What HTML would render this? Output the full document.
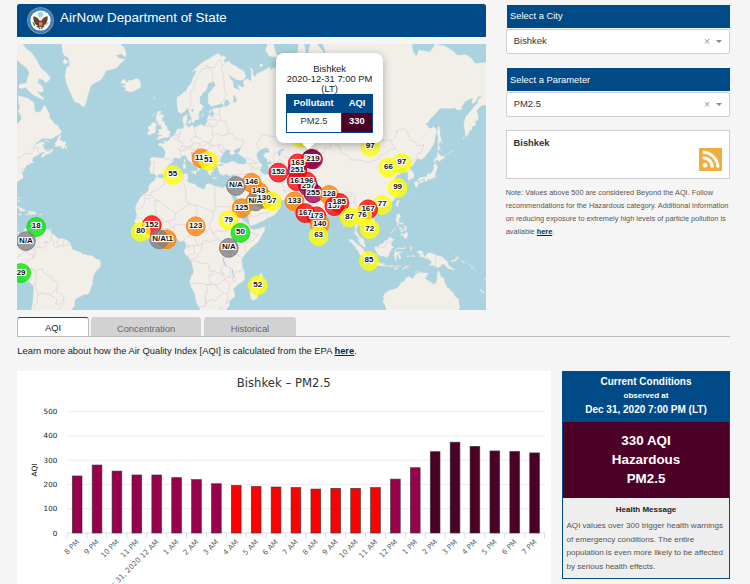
<!DOCTYPE html>
<html lang="en"><head><meta charset="utf-8"><title>AirNow Department of State</title>
<style>
*{box-sizing:border-box;margin:0;padding:0}
html,body{width:750px;height:584px;overflow:hidden;background:#f5f5f5}
body{font-family:"Liberation Sans",Arial,sans-serif;color:#222;position:relative}
.abs{position:absolute}
#hdr{left:17px;top:3.8px;width:469px;height:33px;background:#004a87;border-radius:2.5px 2.5px 0 0;box-shadow:0 1px 0 #fff}
#hdr .t{position:absolute;left:43.1px;top:4.5px;font-size:13.4px;color:#fff;line-height:20px;white-space:nowrap}
#map{left:17px;top:44px;width:469px;height:265.5px;background:#aad3df;overflow:hidden}
.sh{left:506.5px;width:223px;height:23.4px;background:#004a87;color:#fff;font-size:9.4px;line-height:22.6px;padding-left:3.5px}
.sel{left:506.3px;width:223.5px;height:24.4px;background:#fff;border:1px solid #ccc;border-radius:2.5px;font-size:9.4px;line-height:22px;padding-left:6.5px;color:#333}
.sel .x{position:absolute;right:18.6px;top:-.5px;color:#999;font-size:10.5px}
.sel .a{position:absolute;right:7px;top:10px;width:0;height:0;border-left:3px solid transparent;border-right:3px solid transparent;border-top:3.200px solid #888}
#rss{left:506px;top:130px;width:224px;height:48.7px;background:#fff;border:1px solid #ccc}
#rss b{position:absolute;left:6.5px;top:6px;font-size:9.4px;color:#333;line-height:11px}
#note{left:505.7px;top:185.5px;width:232px;font-size:7.35px;line-height:13px;color:#555}
#note a{color:#0a2a4a;font-weight:bold;text-decoration:underline}
.tab{top:317.3px;height:19.6px;font-size:9.4px;text-align:center;line-height:19.5px;border-radius:3px 3px 0 0}
#tabline{left:17px;top:336.4px;width:713px;height:1px;background:#bbb}
#learn{left:17.3px;top:344.5px;font-size:9.35px;line-height:12px;color:#222;white-space:nowrap}
#learn a{color:#0a2a4a;font-weight:bold;text-decoration:underline}
#chart{left:17.3px;top:371px;width:533.7px;height:213px;background:#fff}
#cc{left:562px;top:370.7px;width:168px;height:208.8px;border:1px solid #004a87;background:#eee}
#cc .n{position:absolute;left:0;top:0;width:100%;height:50.3px;background:#004a87;color:#fff;text-align:center;font-weight:bold}
#cc .m{position:absolute;left:0;top:50.3px;width:100%;height:76.2px;background:#4c0026;color:#fff;text-align:center;font-weight:bold;font-size:13.4px;line-height:19px;padding-top:9.5px}
#cc .h{position:absolute;left:0;top:132.3px;width:100%;text-align:center;font-weight:bold;font-size:8px;color:#222;line-height:12px}
#cc .p{position:absolute;left:3.5px;top:147.1px;width:164px;font-size:8.05px;line-height:13.85px;color:#555}

.ml{position:absolute;width:30px;text-align:center;font-weight:bold;font-size:8px;line-height:9px;color:#111;text-shadow:-1px -1px 0 #fff,1px -1px 0 #fff,-1px 1px 0 #fff,1px 1px 0 #fff,0 -1px 0 #fff,0 1px 0 #fff,-1px 0 0 #fff,1px 0 0 #fff,0 0 2px #fff,0 0 2px #fff}
.pop{position:absolute;width:107.6px;height:89.8px;background:#fff;border-radius:8px;box-shadow:0 2px 8px rgba(0,0,0,.3)}
.pop .pt{position:absolute;left:0;top:10.6px;width:100%;text-align:center;font-size:9.4px;line-height:10.05px;color:#1a1a1a}
.tb{position:absolute;left:10.1px;top:40.7px;width:87px;height:38.9px;background:#004a87;font-size:9.4px}
.tb .c{position:absolute;text-align:center;line-height:11px;white-space:nowrap}
.tb .h1{left:0;top:3.2px;width:55.4px;color:#fff;font-weight:bold}
.tb .h2{left:55.4px;top:3.2px;width:31.600px;color:#fff;font-weight:bold}
.tb .d1{left:.9px;top:19.3px;width:54.5px;height:18.7px;background:#fff;color:#333;padding-top:2.1px}
.tb .d2{left:55.8px;top:19.3px;width:30.3px;height:18.7px;background:#4c0026;color:#fff;font-weight:bold;padding-top:2.1px}
.tip{position:absolute;left:286.3px;top:90.6px;width:10px;height:10px;transform:rotate(45deg);box-shadow:0 2px 8px rgba(0,0,0,.3)}
</style></head><body>
<div id="hdr" class="abs">
<svg class="abs" style="left:9.8px;top:2.8px" width="27" height="27" viewBox="0 0 27 27">
<circle cx="13.5" cy="13.5" r="13.3" fill="#b5b06a"/><circle cx="13.5" cy="13.5" r="12.75" fill="#3d7fc4"/><circle cx="13.5" cy="13.5" r="10.1" fill="#fdfdfb"/>
<circle cx="13.5" cy="7.500" r="2.700" fill="#a5cfe9"/>
<path d="M6.400 9.200c1.700.3 3.300 1 4.600 2.200l1.400 2h2.200l1.400-2c1.300-1.200 2.900-1.900 4.600-2.200.3 2.900-.3 5.600-2 8l-2.300 1.600 1.600 1.300-2.200.3-1 2-1.200-1.500-1.200 1.500-1-2-2.200-.3 1.600-1.300-2.300-1.600c-1.700-2.400-2.300-5.100-2-8z" fill="#6b4320"/>
<path d="M12.300 10.800c.3-.9.800-1.300 1.300-1.300s1 .4 1.200 1.300l-.4 1.700h-1.700z" fill="#efe9d8"/>
<rect x="12" y="14.200" width="3.300" height="4.400" rx=".9" fill="#ee7a86"/><path d="M12 14.200h3.300v1.400h-3.300z" fill="#2b5fb5"/>
<path d="M5.600 14.400c1.200.8 2.200 2.100 2.800 3.800l-.9 1.100c-1.100-1.300-1.800-2.900-1.900-4.900z" fill="#4e8b43"/>
<path d="M21.200 14.600l-2.700 3.600.7.900 2.600-3.700z" fill="#b9b9b9"/>
<path d="M11.700 19.800l1.800 2.200 1.800-2.200z" fill="#c9c4b8"/>
</svg>
<div class="t">AirNow Department of State</div></div>
<div id="map" class="abs">
<svg width="469" height="265.5" viewBox="0 0 469 265.5" style="position:absolute;left:0;top:0">
<path fill="#f2efe9" stroke="#e3dcd2" stroke-width="0.3" d="M203.0,10.1 199.4,9.8 195.4,12.4 191.2,15.3 186.4,17.5 183.6,19.7 180.7,22.4 177.9,24.5 175.0,27.6 177.9,26.8 179.8,27.0 177.7,30.6 175.0,35.9 173.7,40.0 171.6,41.8 168.9,47.1 166.4,48.4 164.9,49.7 161.9,52.2 160.0,53.4 159.8,58.2 160.2,60.5 160.0,62.5 160.9,66.0 161.1,67.7 163.7,69.5 165.5,69.1 167.0,67.8 169.3,65.8 170.2,63.6 171.0,65.1 171.5,66.2 172.9,70.6 174.1,73.4 174.7,74.2 174.1,75.4 174.4,76.3 175.0,77.8 174.7,78.5 176.5,78.5 177.6,78.0 177.5,76.8 178.5,76.0 180.0,76.0 180.8,75.6 181.4,74.2 181.6,72.1 182.0,70.4 182.4,67.3 184.2,66.8 185.1,65.1 186.4,63.0 186.1,61.7 183.0,59.4 182.8,57.0 182.9,55.4 183.3,52.6 184.4,51.6 186.0,48.8 188.9,46.9 190.6,42.7 191.2,40.0 192.5,38.9 196.2,37.7 197.0,38.0 198.6,41.4 196.8,42.7 194.2,46.5 191.2,49.7 190.9,53.2 191.2,56.0 191.1,57.8 190.8,59.0 192.5,60.5 194.0,62.8 197.9,61.5 201.6,60.4 204.9,59.4 207.8,62.3 205.5,62.5 203.6,63.8 200.7,63.8 197.4,64.2 195.0,65.1 195.0,66.6 196.9,68.2 196.6,69.8 196.2,72.8 194.4,73.0 193.3,70.4 191.3,71.6 190.2,74.8 190.4,77.5 188.3,80.0 188.2,81.5 187.2,82.0 186.0,81.9 186.1,81.2 185.1,80.4 183.7,80.6 182.3,81.2 179.9,82.5 177.4,83.4 176.5,82.6 176.2,81.2 175.2,81.7 174.1,81.6 173.3,82.6 172.1,83.4 171.0,83.3 171.4,81.8 169.6,82.0 169.1,80.5 168.7,79.2 168.9,78.2 169.8,76.0 171.0,75.1 169.9,74.4 169.9,73.0 170.3,71.4 170.4,70.4 169.2,70.9 166.6,72.6 165.9,74.1 165.7,76.5 165.6,78.0 166.3,78.3 166.7,80.2 166.6,82.1 167.1,82.8 166.8,83.5 166.4,84.6 165.7,84.6 163.8,84.1 163.7,85.2 163.4,84.9 160.7,85.0 159.3,86.5 158.9,88.0 158.1,89.5 157.0,91.1 155.8,91.8 154.7,92.4 153.8,92.7 153.3,92.9 153.3,93.4 153.3,94.9 152.3,95.7 150.4,97.0 149.9,97.6 148.2,97.4 147.8,96.4 147.2,96.5 146.5,96.3 147.2,97.9 147.2,98.9 147.4,99.5 146.4,99.4 145.1,99.8 144.3,98.9 142.6,99.2 141.2,100.2 141.9,100.5 141.2,101.2 141.9,101.9 143.8,102.1 144.3,102.8 145.5,103.3 146.1,103.4 146.4,104.7 146.8,105.5 148.1,106.5 148.2,108.1 147.9,110.6 147.4,113.6 146.4,114.1 144.5,114.0 143.0,113.7 139.5,113.5 136.9,113.5 135.6,112.8 134.3,113.9 132.6,115.2 133.6,117.0 133.8,119.7 133.4,122.0 132.3,124.2 132.2,125.5 132.9,125.7 132.7,126.5 133.4,127.6 133.1,129.8 135.2,129.8 137.0,129.4 138.3,131.0 139.6,132.2 140.1,131.9 141.9,130.6 143.6,130.6 145.6,130.3 146.1,130.5 148.9,128.3 149.3,126.6 150.7,125.7 149.6,123.9 150.2,122.6 151.9,120.7 152.6,119.8 154.4,119.1 156.6,116.7 156.1,115.7 156.2,114.7 157.3,113.9 159.0,113.9 160.4,114.1 161.5,114.7 162.9,114.2 164.1,113.1 167.3,111.2 169.0,112.0 169.9,113.5 170.2,115.1 171.4,116.5 172.7,117.2 173.6,118.1 174.2,118.9 176.1,119.5 177.4,120.5 177.5,121.0 178.3,120.9 178.8,122.0 179.4,122.5 180.3,123.8 180.9,125.0 180.4,125.9 180.1,127.2 180.8,127.6 181.9,126.6 182.9,124.8 181.7,123.2 183.1,121.4 184.5,122.4 185.2,123.0 185.5,122.2 184.4,121.0 182.4,119.7 181.1,117.8 178.8,117.5 177.3,116.3 176.0,113.3 174.2,112.1 174.1,109.7 173.8,108.5 176.5,107.9 176.0,108.3 176.6,110.0 177.8,108.7 179.3,112.0 181.6,113.6 184.7,115.8 186.6,117.2 187.3,119.2 187.4,121.4 188.3,123.3 188.9,123.8 189.8,125.1 190.4,126.6 191.6,126.8 190.5,127.6 191.4,129.1 191.6,130.3 193.1,131.3 193.7,130.3 194.4,131.2 194.1,129.1 193.7,128.5 195.0,128.8 194.1,127.7 195.3,127.6 196.0,128.3 196.1,127.0 194.1,125.4 193.3,125.3 194.0,124.2 194.6,124.3 193.9,122.8 193.3,122.3 193.9,121.0 194.7,121.9 195.4,122.7 196.0,122.7 196.7,122.2 195.8,120.8 196.7,120.2 199.5,120.4 199.9,121.0 200.2,122.4 200.1,122.7 199.9,123.8 201.1,124.3 201.5,126.4 200.3,126.7 202.2,127.8 202.5,129.8 204.1,130.2 203.6,130.8 205.7,130.7 206.7,131.7 208.7,130.1 211.2,130.9 212.8,132.1 214.9,131.5 216.2,130.3 217.6,130.9 219.1,130.8 218.7,132.0 218.4,133.3 218.6,134.8 218.5,135.8 217.9,137.1 217.3,138.5 216.9,139.6 216.5,141.2 215.9,142.5 214.6,143.4 211.8,143.0 212.2,146.0 213.3,147.9 214.2,149.7 215.5,150.8 216.0,149.1 216.8,146.9 216.5,148.3 216.2,150.2 218.2,151.6 219.7,154.0 222.7,158.5 224.5,161.2 224.8,163.9 226.9,166.6 228.5,168.7 231.3,173.1 232.0,177.3 232.6,180.2 233.0,181.5 236.0,181.2 238.8,180.0 243.8,177.8 247.4,176.5 249.7,174.5 253.3,172.9 255.6,171.9 257.6,171.1 258.8,169.1 260.3,168.9 260.2,167.6 261.3,166.1 262.2,165.5 264.2,161.7 263.6,161.6 261.9,159.5 258.3,157.9 257.6,156.3 257.7,153.7 256.8,154.9 255.6,156.0 253.8,157.7 250.7,158.5 248.5,158.1 248.5,156.6 248.4,156.0 248.3,155.2 247.8,154.2 247.0,155.8 246.9,157.1 245.9,155.2 245.7,153.5 244.8,152.4 242.6,149.3 241.7,147.3 241.3,147.1 242.1,146.1 242.7,146.0 243.4,145.2 245.8,145.7 247.1,148.1 248.2,150.4 249.4,150.6 254.8,153.3 257.4,152.0 258.6,152.4 259.0,153.6 260.3,155.2 265.7,156.0 267.6,156.2 269.0,156.3 271.1,156.0 273.4,156.2 276.9,155.8 277.8,157.0 278.8,158.9 280.2,159.3 280.9,160.4 282.3,161.1 284.2,160.9 283.6,161.8 281.8,161.9 281.6,162.4 282.8,163.6 284.3,165.1 285.5,165.5 287.6,164.5 287.7,163.3 288.3,162.2 288.8,164.7 289.0,166.1 289.0,169.0 289.9,173.0 290.8,176.0 291.4,177.3 292.8,181.1 294.6,184.2 295.5,186.8 296.8,189.6 298.0,190.4 299.1,189.0 301.3,188.0 302.3,186.1 302.3,182.9 303.2,180.7 302.9,178.0 303.2,175.9 304.8,174.6 306.9,173.0 308.9,171.5 312.0,168.4 313.7,167.3 315.3,166.4 316.0,164.5 316.9,163.6 318.1,163.5 319.8,163.3 322.2,163.1 323.2,161.8 325.1,162.2 325.4,164.0 326.1,165.2 327.2,166.6 328.4,168.1 329.9,170.0 330.2,172.3 329.7,174.9 331.2,175.4 333.6,173.8 334.8,172.3 336.1,174.0 336.5,176.4 337.1,178.8 338.1,181.9 338.0,186.7 337.5,189.7 337.5,190.8 338.6,190.4 339.8,191.7 340.8,193.3 341.3,195.5 341.9,197.7 343.3,200.1 345.0,201.6 347.4,203.3 348.3,203.3 348.8,203.0 348.1,201.2 347.1,198.6 347.2,197.0 346.7,195.6 345.0,194.0 344.1,193.5 343.1,192.7 341.9,192.0 340.9,189.6 340.5,188.2 339.5,188.3 339.2,185.7 340.3,183.2 340.7,181.7 340.8,180.6 341.8,179.8 342.4,181.0 342.4,181.5 343.2,181.4 344.7,182.0 346.2,183.5 346.6,184.3 347.4,185.4 348.7,185.6 349.3,185.9 350.4,186.7 349.9,188.2 349.8,189.4 350.8,188.9 351.7,188.1 353.5,186.7 354.2,186.0 356.1,184.9 357.9,183.6 358.2,183.0 358.2,182.3 358.7,181.0 358.3,179.3 357.7,176.5 356.4,174.8 355.4,173.8 353.3,172.0 351.7,169.4 352.0,167.4 353.3,166.4 353.7,165.3 354.2,165.0 356.0,163.9 358.1,163.9 359.2,164.0 359.6,166.3 360.3,166.3 360.7,165.5 360.5,164.5 361.7,164.0 363.5,163.4 365.5,162.8 366.5,162.5 366.6,161.3 367.8,162.2 368.9,161.4 370.0,161.2 372.5,160.0 373.7,159.2 375.2,157.7 376.3,156.8 377.1,156.0 378.1,154.5 378.8,152.8 380.4,150.4 381.9,148.9 382.5,147.6 382.4,146.1 380.5,145.1 382.4,144.0 382.4,142.1 381.5,140.4 380.5,139.2 379.8,137.3 377.5,135.1 378.0,133.6 379.5,132.1 380.7,130.8 383.7,130.1 384.0,128.9 382.8,128.6 381.5,128.5 380.2,127.9 378.6,128.9 376.8,129.1 377.5,128.0 375.0,127.0 374.5,126.0 374.5,125.0 376.8,124.6 378.1,122.7 380.6,120.8 381.1,120.3 383.0,120.9 381.9,123.0 381.3,124.3 381.9,125.3 383.2,124.3 384.9,123.3 387.1,122.8 387.8,123.5 388.9,123.7 388.7,125.7 387.8,127.2 389.1,128.2 391.4,128.8 391.2,130.1 390.5,130.3 391.3,132.3 390.8,135.0 391.2,136.2 393.6,135.3 396.1,134.3 396.7,133.4 397.0,132.1 396.8,129.8 395.9,128.0 395.2,127.0 393.0,124.6 393.5,123.0 394.4,122.5 396.3,120.9 397.5,118.1 398.6,116.9 399.2,116.7 399.5,115.9 401.5,114.7 403.4,115.4 405.1,115.2 407.9,113.0 410.4,109.5 413.7,105.4 416.0,101.3 417.5,98.5 418.4,91.1 419.8,88.8 419.2,86.3 419.6,85.4 417.5,83.4 416.5,82.5 414.1,84.4 411.6,83.8 410.8,81.2 408.0,80.8 411.2,78.2 413.4,74.9 417.9,70.2 423.0,64.5 428.0,64.3 433.1,64.7 437.5,63.8 440.7,66.2 445.5,65.1 444.5,63.6 448.3,57.4 453.1,55.0 456.0,54.6 454.6,57.8 455.6,59.8 458.8,57.4 461.3,52.6 464.5,52.2 461.3,55.8 460.3,59.4 458.4,61.3 454.9,65.5 451.6,69.5 448.7,72.7 447.2,77.8 446.8,82.1 447.8,87.0 448.7,92.9 451.8,89.4 452.3,86.3 455.0,86.0 455.0,83.1 459.0,80.7 458.4,78.2 459.8,75.8 461.4,76.5 461.1,70.6 459.8,67.7 460.8,64.9 463.6,62.5 466.4,60.9 474.6,62.5 479.8,56.2 489.3,52.2 493.1,41.4 493.1,21.9 483.6,17.5 474.0,16.4 468.3,18.6 457.9,19.2 455.0,14.7 449.3,10.7 440.7,11.3 436.0,7.1 428.3,2.2 418.8,-0.3 418.2,-1.0 416.0,3.5 413.1,7.7 408.3,7.1 401.7,5.9 399.8,11.9 397.9,10.7 396.0,6.5 395.0,2.2 396.9,-1.0 392.1,-5.6 386.4,-6.3 384.5,-1.6 377.9,-2.3 367.4,-6.3 359.8,-8.3 354.1,-2.9 352.1,-10.4 350.2,-31.2 340.7,-27.1 321.7,-20.0 316.0,-16.2 314.1,-8.3 315.0,-4.9 304.0,-4.9 307.4,4.7 308.3,10.7 305.5,6.5 301.7,2.2 298.8,-1.0 293.1,-0.3 291.2,8.9 291.8,16.4 290.8,21.9 291.8,25.5 289.3,29.6 287.4,33.0 285.5,34.4 286.4,30.6 287.8,24.5 288.7,19.2 288.5,13.6 288.9,7.7 287.4,0.9 283.6,-3.6 281.3,0.9 280.7,7.7 277.5,11.9 278.2,17.5 277.5,21.9 278.8,25.0 276.0,22.9 273.1,20.2 266.4,17.0 265.1,18.6 264.5,24.0 260.7,22.4 256.9,24.0 255.0,25.0 253.7,26.0 253.1,22.4 249.3,25.0 245.5,27.0 242.6,28.6 239.8,29.1 238.8,32.5 236.0,31.0 236.0,25.5 232.7,23.7 234.4,27.6 234.1,34.0 234.1,37.3 231.2,34.9 227.4,35.4 226.1,38.7 227.0,42.7 225.9,43.2 222.6,41.8 220.3,40.7 221.7,44.1 222.6,46.3 216.7,43.6 216.5,41.4 216.0,37.3 213.1,34.0 212.0,31.3 215.6,33.5 218.8,35.6 223.6,36.6 226.4,35.4 228.7,33.0 228.9,31.5 226.1,26.3 222.6,25.0 218.8,21.9 214.1,20.0 212.2,17.0 209.3,18.1 207.4,17.8 206.4,15.9 209.5,14.4 207.4,12.4 205.7,11.5 204.3,13.0ZM139.2,132.7 140.2,132.5 141.9,134.2 142.8,134.0 144.6,133.9 146.1,134.3 149.0,132.9 150.4,132.3 152.7,131.0 156.1,130.4 157.7,130.0 159.9,130.4 161.2,130.3 163.4,130.1 165.0,130.1 166.9,130.0 169.0,129.1 169.9,130.2 171.3,129.7 170.4,131.3 170.5,132.6 171.3,133.4 170.8,135.2 169.5,137.1 171.2,137.4 171.4,138.0 172.2,138.8 175.4,139.4 179.0,140.6 179.6,142.3 181.9,143.2 184.5,144.5 185.6,144.8 186.8,145.3 188.4,144.1 188.4,141.2 190.1,139.8 192.4,139.4 193.4,139.7 194.3,140.5 195.9,141.2 198.1,141.9 198.2,142.4 199.6,142.3 202.2,142.9 204.5,143.5 205.4,144.0 207.2,143.2 208.2,142.6 209.5,142.3 210.9,142.5 211.8,143.0 212.2,146.0 211.9,146.7 212.4,147.8 213.3,149.5 214.7,151.8 214.9,152.9 215.5,154.3 216.7,156.4 217.8,158.8 218.4,158.9 220.1,162.4 221.1,165.1 221.1,167.7 221.4,168.7 223.0,170.5 223.8,170.9 224.5,173.9 225.4,175.7 226.4,176.9 228.2,177.5 229.7,179.0 231.7,180.8 232.4,181.9 232.7,182.8 231.3,183.7 232.4,183.6 233.1,184.0 236.0,185.8 238.8,185.2 242.1,184.4 243.9,184.2 246.9,182.8 247.9,183.1 247.7,185.5 247.2,187.6 245.2,190.6 244.2,192.6 242.7,195.6 240.7,198.2 236.6,201.9 235.5,202.5 234.1,203.7 231.3,206.5 229.5,208.9 228.2,210.1 226.7,211.9 225.8,213.5 224.7,215.5 224.2,217.2 224.3,218.1 225.1,218.8 225.4,220.1 225.5,222.9 225.9,224.9 226.8,225.5 227.4,226.4 227.4,230.7 227.8,233.8 227.8,234.8 226.2,237.1 222.9,239.2 220.7,240.7 219.4,242.4 216.7,244.3 216.4,245.7 216.9,246.7 217.5,248.8 217.9,252.6 217.7,253.1 214.4,255.3 212.3,257.1 213.0,257.8 212.9,258.9 212.1,262.3 211.4,263.1 209.4,265.5 208.2,267.4 203.4,272.4 199.0,274.7 188.3,276.7 185.4,274.5 184.3,272.4 185.1,270.4 183.1,266.5 182.4,264.1 181.6,262.8 179.1,258.5 178.6,255.0 177.9,250.7 176.8,248.3 175.5,245.3 174.4,243.4 172.6,239.2 172.8,236.3 173.4,235.1 174.1,232.5 175.8,230.0 176.6,227.3 176.4,226.4 175.4,222.7 175.2,220.8 174.8,219.6 173.8,217.5 173.5,216.4 172.8,215.0 170.5,212.3 168.5,210.4 168.0,209.4 166.8,207.0 168.2,205.0 168.5,203.9 168.9,202.2 169.1,200.2 168.4,198.4 167.8,198.2 166.8,197.1 166.1,197.0 163.9,197.4 162.2,197.6 160.4,195.6 159.6,194.2 156.7,193.5 154.9,193.7 152.6,194.1 152.2,194.5 149.9,195.2 147.9,196.1 146.3,196.7 144.3,196.1 142.6,195.8 138.7,196.4 137.6,196.7 135.5,197.5 133.1,196.3 131.1,194.6 129.7,193.8 128.6,192.9 126.4,191.5 125.0,189.6 124.2,187.6 122.4,185.4 121.5,184.5 120.5,183.1 119.0,182.4 118.3,182.0 118.6,179.9 118.3,179.3 117.9,178.0 116.9,177.4 117.7,176.9 118.8,174.9 119.8,170.7 119.4,168.9 118.8,168.2 119.2,166.3 117.8,165.3 118.0,164.2 119.9,159.3 121.7,156.6 122.6,154.2 124.7,152.1 125.6,150.4 128.7,149.1 130.9,147.2 131.9,144.9 131.4,144.5 131.6,142.5 132.6,140.7 134.1,138.6 135.7,137.8 137.2,136.8 138.5,134.1 139.0,132.7ZM244.1,228.7 244.7,230.4 245.5,231.5 245.8,233.3 246.0,234.5 246.4,236.6 245.0,235.6 245.0,237.0 245.2,238.3 244.3,241.0 243.5,243.3 243.2,244.5 242.3,247.2 241.7,249.1 241.4,250.5 240.9,251.6 240.3,253.5 239.8,255.1 236.2,256.3 234.2,255.0 233.5,253.7 233.4,251.6 232.6,249.2 232.9,248.3 233.9,246.5 234.6,245.3 235.0,244.1 234.1,240.8 234.2,239.1 234.9,237.0 236.5,236.8 238.5,236.1 239.8,235.5 241.2,234.0 241.5,232.7 242.2,231.8 243.1,230.6 243.1,229.6ZM303.1,187.0 302.4,187.2 302.4,188.6 302.2,190.5 302.3,192.6 303.0,194.3 303.8,194.5 304.8,194.1 305.9,193.4 306.1,192.7 305.9,191.1 305.0,189.4 304.2,188.1ZM103.6,39.1 104.9,36.3 107.4,34.7 109.5,38.7 111.6,36.3 115.4,36.1 119.4,34.4 122.4,35.4 124.3,40.9 122.6,44.1 121.3,44.7 117.9,46.7 114.1,48.3 111.6,47.8 109.9,46.5 107.0,46.7 108.3,45.2 108.3,43.6 104.5,42.1 108.3,41.4 107.6,39.6ZM139.4,95.4 143.4,94.9 145.6,94.0 147.8,93.7 150.7,93.3 152.2,92.8 152.9,92.1 153.0,91.3 151.6,91.0 152.5,90.1 153.6,87.9 152.7,86.5 151.0,86.5 150.6,86.6 150.9,85.7 150.4,84.4 150.1,82.8 149.1,81.5 148.0,81.0 147.6,79.8 147.2,77.8 146.4,77.2 145.5,76.5 144.2,76.5 145.3,75.4 144.9,74.9 146.3,73.0 146.8,71.3 146.4,70.6 144.0,70.6 142.3,71.3 143.0,70.0 144.3,67.8 144.5,67.1 143.8,67.1 140.7,67.3 140.2,69.5 139.2,70.9 139.4,73.0 138.4,74.1 139.6,75.4 139.2,78.8 140.7,77.5 140.9,76.8 141.4,78.3 140.5,80.3 141.0,81.0 143.4,80.2 143.4,81.5 144.2,82.8 144.7,82.8 144.4,83.9 144.5,85.0 143.8,85.2 141.5,85.4 141.2,87.0 142.4,87.6 142.4,88.2 141.3,89.1 140.2,89.8 140.5,90.5 142.1,90.7 142.7,90.7 144.2,91.1 145.1,90.7 144.5,91.9 142.3,91.9 141.7,92.5 140.6,94.3ZM138.2,88.9 138.8,86.5 138.6,85.2 138.4,83.1 139.9,81.8 139.4,80.8 138.5,79.1 136.2,78.6 134.4,79.3 133.7,80.8 134.4,81.5 133.9,82.1 131.2,82.3 131.0,83.3 130.8,85.0 133.1,85.7 132.3,86.5 131.4,87.7 130.3,89.1 130.8,90.1 131.6,91.1 134.1,90.7 134.6,90.1 137.1,89.1ZM173.9,127.9 175.7,127.0 180.1,126.8 179.0,129.1 179.1,130.7 177.5,129.8 176.0,129.1 174.3,128.5ZM165.9,120.2 167.8,119.4 168.9,121.3 168.5,124.6 167.4,125.0 166.2,125.0 166.2,121.8ZM166.6,116.5 168.2,114.9 168.4,117.2 167.9,119.0 167.0,118.5ZM195.0,133.4 196.3,133.2 199.2,133.7 200.3,134.1 200.0,134.6 197.3,134.7 195.1,134.0ZM211.8,134.4 213.1,133.7 216.1,133.0 214.8,134.3 215.1,134.6 213.1,135.6 212.0,135.1ZM154.7,123.5 156.2,122.7 156.8,123.3 156.1,124.3ZM194.1,125.1 194.8,125.0 197.1,127.2 196.3,127.4ZM11.2,-44.7 20.7,-23.1 30.3,-24.7 38.8,-19.2 41.7,-8.3 44.5,-0.3 45.5,7.7 47.4,11.9 51.2,13.6 52.7,20.8 49.5,23.4 48.0,32.5 49.5,39.6 51.8,45.0 54.4,50.9 55.6,54.2 58.3,58.2 62.6,59.4 64.7,62.1 66.6,62.8 68.2,61.7 69.1,58.2 70.3,54.2 71.2,50.1 73.1,44.5 74.1,41.4 77.9,38.7 81.7,37.3 85.5,34.0 89.3,26.5 95.0,25.5 99.8,24.0 103.6,19.2 108.0,15.6 102.6,14.2 98.8,11.3 104.5,10.1 108.3,13.6 109.3,9.5 107.4,3.5 103.6,0.9 108.3,-1.6 112.2,-8.3 114.1,-23.1 112.2,-49.6 93.1,-99.1 36.0,-84.5ZM45.7,18.6 47.4,14.7 51.2,17.5 48.9,20.2ZM-40.2,156.6 -4.6,156.6 -2.3,153.4 -3.3,149.1 -4.6,144.8 -4.0,141.9 -1.9,139.8 -0.2,138.0 1.9,137.1 4.3,135.3 6.4,134.0 5.7,130.8 5.5,129.8 4.7,129.1 4.9,127.4 4.5,124.5 5.3,126.2 5.7,128.6 6.3,127.7 7.2,126.2 6.6,124.3 7.6,125.1 9.1,123.0 9.3,121.4 9.5,121.0 13.1,120.0 14.1,119.0 15.6,118.8 16.9,118.3 16.9,117.4 15.8,117.6 15.2,116.5 15.8,115.8 15.8,114.7 16.5,113.2 18.8,112.3 20.3,111.5 22.6,110.2 22.4,109.3 24.5,108.9 26.8,107.7 27.6,108.7 24.9,110.7 24.3,112.8 25.3,113.7 27.8,111.5 29.2,110.7 34.1,108.8 33.3,107.9 36.0,107.2 35.2,104.3 33.3,106.3 32.3,107.3 30.3,107.4 28.3,106.6 26.8,104.1 26.6,101.9 24.5,101.3 27.8,100.2 28.0,98.9 25.5,97.7 22.6,98.4 19.8,99.9 17.5,101.6 16.0,103.6 14.6,104.5 16.5,102.4 17.5,100.9 19.6,98.4 22.1,97.3 23.8,94.9 28.3,94.6 32.5,94.9 36.0,94.6 38.1,92.5 41.5,91.1 44.2,89.1 44.0,86.3 41.9,84.1 41.1,81.5 38.3,80.2 36.9,79.2 35.4,76.5 32.7,73.7 32.5,69.5 30.3,65.8 27.8,60.9 25.5,64.0 24.5,66.6 20.2,68.8 17.7,66.2 17.5,62.1 16.9,58.2 13.5,56.2 11.2,54.2 6.4,53.0 1.9,51.8 1.3,52.6 1.7,59.0 3.0,63.2 0.7,66.9 3.6,71.3 4.5,74.8 1.7,78.8 -1.2,80.8 -1.2,91.0 -5.9,86.6 -6.5,79.5 -11.6,78.8 -17.4,74.8 -25.9,73.0 -29.7,66.6 -30.1,60.9 -26.9,55.0 -22.1,48.0 -17.4,45.0 -14.5,36.8 -11.6,35.4 -5.9,34.4 -5.0,24.5 -6.9,18.1 -11.6,17.5 -17.4,23.4 -22.1,20.2 -26.9,10.7 -32.6,7.7 -40.2,16.4ZM37.3,102.4 39.0,99.9 37.5,99.9 39.8,97.0 40.9,93.4 43.8,90.7 44.5,91.6 42.1,96.1 43.8,95.5 45.5,97.6 48.2,97.6 49.3,99.6 47.6,101.3 49.9,102.4 49.1,105.1 47.4,102.2 47.0,104.5 43.8,104.4 44.9,102.3 40.7,102.4ZM27.6,105.1 28.7,105.8 32.2,105.7 31.2,107.0 29.3,106.3ZM27.4,95.8 32.2,97.3 32.7,98.1 29.3,97.6ZM26.6,56.2 23.6,54.6 17.9,51.8 15.0,50.5 13.1,48.0 8.3,43.6 4.5,45.0 1.7,43.6 2.6,40.0 9.3,39.1 10.3,34.4 12.2,29.6 10.3,24.5 4.5,20.2 0.7,16.4 -1.2,16.4 -9.7,16.4 -17.4,13.6 -20.2,7.7 -20.2,-4.9 -5.9,-8.3 -2.1,-6.3 1.7,-1.0 5.5,-0.3 9.3,4.7 14.1,8.3 17.9,13.0 20.2,17.0 21.7,20.2 24.5,24.5 28.3,27.6 32.2,32.0 33.5,34.0 31.2,37.3 28.3,39.1 26.4,35.9 21.7,34.4 21.1,38.7 25.5,42.3 26.8,46.7 24.9,48.4 20.2,47.1 23.0,50.9 26.4,53.4ZM-2.5,46.7 -5.9,43.6 -10.7,39.1 -13.6,38.2 -15.5,45.0 -12.6,48.8 -8.8,46.3 -6.9,47.5ZM-11.5,163.0 -7.8,160.8 -4.4,160.5 -1.2,161.5 2.6,163.2 6.1,164.9 9.0,166.4 7.4,167.1 2.3,167.2 3.4,165.9 0.7,163.9 -3.1,162.8 -5.9,161.6 -8.8,162.4ZM1.0,170.3 2.6,169.9 5.1,170.9 3.8,171.2 2.3,171.2ZM8.4,170.2 10.4,169.7 12.4,169.8 11.6,168.7 10.4,167.3 13.1,167.3 16.9,167.5 18.4,168.5 20.1,169.7 18.8,170.1 16.9,170.3 15.0,170.5 13.7,171.6 12.5,170.5 9.7,170.8ZM22.2,170.1 25.2,170.2 25.0,170.9 22.3,171.0ZM32.3,185.3 34.2,185.1 34.1,186.5 32.3,186.6ZM1.1,156.2 2.3,156.4 2.3,158.3 1.1,158.1ZM-0.0,153.0 1.9,152.9 3.6,153.4 3.2,154.5 2.4,153.6 0.5,153.4ZM2.9,189.2 3.9,190.6 4.1,189.9 4.7,189.0 6.3,187.6 6.4,185.9 7.7,184.6 8.9,184.2 11.4,183.7 13.7,181.9 14.4,183.2 13.2,183.7 13.9,184.8 15.2,184.3 17.3,183.7 16.5,182.6 17.2,182.4 17.5,183.7 18.2,183.8 20.3,184.8 20.7,185.7 22.8,185.5 24.4,185.5 26.1,186.5 27.0,186.4 28.0,185.7 29.8,185.4 32.4,185.3 31.0,185.7 31.6,186.5 31.7,186.7 34.1,187.6 34.4,189.4 36.3,189.9 38.1,191.5 39.5,192.8 40.7,193.9 41.7,194.4 45.3,194.4 47.4,194.7 50.6,196.4 51.9,197.8 52.9,198.4 53.7,201.4 55.2,202.7 55.0,204.1 55.0,205.2 58.1,206.3 58.8,207.1 60.1,207.0 62.6,207.9 64.5,208.7 65.9,210.6 67.6,210.3 70.7,211.3 72.4,211.3 73.9,211.2 76.9,212.9 78.4,214.4 80.5,215.5 82.7,215.7 83.2,216.9 84.0,219.5 83.8,221.2 82.2,224.3 79.7,226.8 78.4,228.6 76.9,230.8 75.9,234.3 75.8,237.6 75.5,240.2 74.5,242.1 73.5,245.3 72.2,248.8 70.3,250.6 68.0,250.7 65.9,250.8 63.8,252.5 62.1,252.9 59.8,254.4 57.9,256.1 57.7,257.6 57.9,260.5 57.3,262.5 55.5,264.3 54.8,265.7 51.2,270.6 48.3,274.7 41.7,279.4 11.2,279.4 14.1,270.2 14.4,265.5 15.8,257.8 16.2,252.2 16.6,245.1 16.3,241.7 14.3,240.0 13.1,238.7 9.3,236.7 7.1,235.4 4.9,232.4 3.4,228.9 2.4,227.1 0.5,223.2 -0.2,221.4 -2.0,219.0 -4.2,216.9 -4.6,214.6 -3.1,212.5 -1.9,210.6 -4.0,210.0 -3.5,207.6 -2.2,205.7 -1.5,203.9 0.2,202.4 1.3,200.8 3.4,198.4 2.6,197.6 2.5,195.3 2.8,193.9 1.9,192.0 1.4,191.4 1.0,190.4 1.5,189.7 -1.2,188.6 -3.1,190.1 -5.9,190.1 -7.8,188.6 -7.8,186.7 -5.0,188.6 -1.9,187.9 -1.5,187.5 -0.0,187.7 1.7,188.2ZM399.1,143.6 398.4,143.0 398.2,141.2 397.6,139.7 397.0,138.3 397.8,138.0 398.6,137.8 399.6,137.0 399.8,137.8 401.2,137.6 400.9,138.6 401.6,139.3 401.0,140.1 400.6,141.6 400.4,142.8 400.0,142.6ZM401.7,138.4 403.0,137.2 403.6,136.7 405.6,136.1 406.7,136.4 406.6,136.7 405.8,138.6 404.6,138.0 403.6,139.8 403.0,139.3 402.7,138.7ZM399.6,137.0 400.5,135.9 401.8,134.8 402.9,133.6 404.1,133.3 405.9,133.3 407.5,133.0 409.4,133.0 409.2,132.3 410.4,130.8 410.6,129.1 411.9,128.6 411.2,129.7 411.6,130.4 413.6,129.4 414.1,129.0 415.1,127.6 415.9,126.8 416.6,125.2 417.0,123.2 416.3,122.7 416.9,122.0 416.8,120.9 417.6,119.4 418.3,120.5 419.2,119.7 418.6,118.7 419.7,118.9 419.6,120.8 419.8,121.2 420.3,122.0 420.7,123.4 420.5,124.3 420.0,125.3 419.8,126.7 418.9,126.8 418.7,127.9 418.8,130.0 418.1,130.8 418.2,132.3 418.6,132.9 417.7,133.6 417.5,134.2 416.7,134.8 416.6,133.9 416.9,133.2 416.2,133.5 416.2,134.2 415.3,134.0 415.2,134.3 414.9,135.3 414.7,135.5 414.7,134.4 413.9,134.7 413.5,135.5 412.6,135.3 411.2,135.5 410.9,134.4 410.3,135.2 410.9,135.8 411.0,136.2 409.7,136.7 409.3,137.5 408.9,138.2 408.1,137.5 407.7,136.3 408.1,135.4 407.8,135.3 406.8,135.1 405.3,135.5 404.3,135.8 402.5,136.0 402.1,136.5 401.9,137.0 400.9,136.8 400.2,137.0ZM417.1,118.9 417.2,117.8 416.6,116.3 417.3,115.4 417.6,113.9 418.8,114.4 419.5,114.3 420.0,112.4 420.2,109.9 420.1,108.5 420.6,108.2 421.8,109.8 423.3,111.4 425.0,112.2 425.8,112.5 427.1,111.4 426.8,112.2 426.7,113.2 427.5,114.0 428.0,113.9 426.1,114.8 425.3,115.0 423.2,116.8 423.1,117.7 422.2,117.1 420.0,115.9 418.8,116.7 418.6,116.3 417.6,116.2 418.0,117.2 419.2,118.0 418.3,118.1 417.3,119.0ZM420.9,107.2 420.4,105.1 420.8,104.0 420.9,102.0 420.8,98.2 421.0,92.8 420.1,89.4 420.4,85.4 421.3,82.1 422.1,81.7 422.6,84.7 423.2,87.9 423.0,90.1 423.8,94.0 424.7,97.3 426.0,99.4 423.8,97.6 422.8,97.8 422.2,99.5 421.8,101.7 422.5,103.3 423.4,104.5 423.4,106.8 422.2,105.2 421.5,105.4ZM427.4,112.8 428.9,111.1 428.3,111.1 427.2,112.3ZM430.1,111.1 433.7,108.3 432.9,108.5 430.2,110.2ZM435.0,108.0 436.9,106.3 436.3,106.3 434.8,107.4ZM439.8,104.4 440.5,103.3 440.0,103.6ZM445.9,95.4 447.6,93.3 446.6,93.1 445.9,94.6ZM381.8,156.0 382.6,156.6 382.4,157.4 381.9,158.7 381.0,161.3 380.4,163.0 379.9,162.1 379.3,161.6 378.9,160.8 379.1,159.5 379.8,158.1 380.5,157.0 381.5,156.2ZM360.3,166.8 361.7,167.6 360.6,169.3 358.8,170.5 357.3,169.9 357.1,168.7 357.8,167.4 359.1,166.9ZM380.0,169.9 382.0,170.2 382.9,169.8 383.5,172.8 381.8,175.4 381.9,177.1 382.6,178.7 384.5,178.6 386.3,179.2 386.0,180.5 386.6,181.7 386.2,181.5 384.5,179.8 384.1,179.2 383.8,180.4 381.9,179.1 380.8,179.4 380.0,178.7 380.6,177.8 379.7,178.0 379.3,177.3 378.8,176.2 378.6,174.1 379.3,174.9 379.4,173.7 379.5,171.8 379.9,170.5ZM382.8,192.6 384.5,190.1 385.2,189.4 386.9,190.0 387.7,189.6 388.5,188.9 389.3,188.6 389.3,187.1 390.9,190.1 390.7,192.5 390.6,193.8 389.5,192.3 389.1,192.9 389.5,193.6 389.1,195.2 388.7,194.2 387.4,194.3 386.5,193.3 386.8,192.0 385.3,190.9 384.5,191.5 383.8,191.3ZM387.0,181.7 388.9,181.7 389.8,184.6 388.7,186.3 387.9,186.7 387.2,184.9 388.1,183.9 387.4,183.0ZM382.4,183.0 384.8,183.7 384.5,184.8 382.6,185.8 382.4,184.7ZM385.1,184.8 385.6,185.8 385.1,188.0 384.5,188.5 383.4,187.1 384.2,185.7ZM385.3,187.7 385.8,187.4 386.5,184.2 386.1,184.5ZM386.1,187.1 387.0,186.4 387.6,187.1 386.8,187.4ZM379.4,179.9 380.6,179.8 381.8,181.6 381.2,182.4 380.3,181.4ZM373.5,189.8 374.2,189.6 376.5,186.8 377.9,184.9 377.9,183.9 377.3,184.8 375.6,186.8 373.7,189.0ZM359.1,201.8 360.4,202.6 361.7,202.8 362.3,200.5 363.8,200.3 365.5,199.7 367.3,197.4 369.2,196.3 370.2,195.9 371.3,194.4 372.6,192.4 373.1,193.2 374.4,193.6 375.2,194.6 377.4,195.9 375.6,196.2 376.2,197.3 374.8,197.7 374.2,199.5 374.4,201.0 376.9,203.8 375.0,204.1 374.1,205.6 374.1,206.9 372.8,208.2 372.0,209.6 372.2,211.3 371.6,212.1 371.2,212.8 368.6,213.7 367.6,212.2 365.5,211.9 363.2,212.5 363.0,211.3 361.5,211.4 359.7,209.3 359.7,208.2 358.1,205.9 357.8,204.1 357.9,203.0ZM331.8,195.2 335.3,195.9 336.7,196.5 338.2,198.6 340.3,200.1 342.2,201.7 343.5,202.6 344.9,203.9 346.4,204.8 347.3,207.4 349.0,207.8 349.5,209.4 350.2,210.3 351.8,211.3 352.2,212.0 351.9,213.8 352.0,215.3 351.7,217.0 350.8,216.2 349.4,217.1 348.2,215.7 345.0,213.0 342.8,210.7 341.8,208.4 341.4,207.6 340.3,205.8 339.5,205.4 339.0,204.8 338.4,202.5 336.5,201.5 335.3,199.6 333.3,197.9 332.3,197.0ZM350.5,209.4 352.0,208.8 353.5,210.7 353.3,211.6 352.0,211.1ZM355.2,210.8 356.4,210.9 356.3,211.8 355.3,211.9ZM352.1,217.1 353.8,217.4 355.2,217.6 357.0,218.6 358.1,218.9 360.6,219.1 361.5,218.0 362.3,218.6 363.7,219.0 365.0,219.6 365.9,220.6 367.4,220.5 368.1,221.5 368.4,222.5 366.6,222.0 364.9,221.9 362.6,221.7 360.1,221.1 357.9,220.5 357.2,220.5 355.4,220.5 353.0,219.8 350.6,218.7 351.8,218.0ZM364.9,219.2 367.2,219.0 367.6,219.4 365.0,219.6ZM368.2,221.4 369.7,221.2 370.6,221.9 369.7,222.6 368.5,221.9ZM370.9,221.9 372.0,221.5 372.5,222.2 371.4,222.8ZM372.6,221.9 374.4,221.4 375.6,221.8 377.3,222.0 376.9,222.5 374.6,222.8 372.7,223.1ZM378.4,222.0 380.3,221.7 382.6,222.0 384.5,221.7 384.1,222.2 381.7,222.8 378.6,222.6ZM376.9,223.8 378.8,223.7 380.4,225.1 378.8,225.5 376.9,224.5ZM385.5,225.6 386.4,223.7 388.3,222.3 392.7,221.9 391.2,223.0 388.3,224.2 386.4,225.5ZM388.1,202.9 388.8,202.8 387.6,205.0 384.6,204.8 381.7,204.8 379.4,204.8 378.9,207.1 380.2,208.5 381.9,207.5 383.1,207.5 384.1,207.6 385.3,207.3 384.3,208.7 383.0,208.8 381.4,209.6 382.6,210.7 383.4,212.3 383.8,213.4 384.2,214.2 383.2,215.0 381.9,215.0 381.9,213.5 380.9,210.8 379.2,211.5 379.6,214.5 379.3,215.6 379.7,216.5 378.2,216.7 377.7,215.6 378.1,213.4 376.9,212.6 376.7,210.9 377.5,209.4 378.3,207.1 378.4,205.6 380.3,203.8 381.5,203.6 384.3,204.0 386.4,204.0 387.5,203.5ZM393.1,203.9 393.9,201.6 394.1,203.3 395.4,202.9 394.4,204.5 395.6,205.2 394.1,205.2 394.8,207.3 393.5,206.2 393.3,204.7ZM393.9,211.9 396.0,211.2 399.4,212.3 397.9,212.5 394.4,212.5ZM390.2,211.9 391.8,211.6 392.5,212.5 391.2,213.1 390.2,212.7ZM400.2,207.5 402.6,206.6 405.6,207.5 406.1,209.4 407.0,212.2 408.3,212.2 410.1,210.0 412.7,208.7 414.5,209.3 418.3,210.6 419.4,210.9 421.4,211.8 423.8,212.6 425.5,213.1 428.0,215.8 429.2,216.5 431.9,218.4 430.2,218.6 431.4,220.6 432.5,222.2 433.1,222.8 434.6,223.0 434.4,224.2 436.1,224.3 437.6,225.4 437.2,226.1 435.0,225.6 432.7,225.3 430.5,223.9 429.3,222.6 427.9,221.0 426.1,220.3 424.5,220.5 423.8,221.9 423.0,223.1 421.1,223.4 418.8,223.3 417.6,222.0 415.0,221.3 412.4,221.9 413.1,219.7 414.6,218.8 414.1,217.2 413.3,216.4 411.0,215.0 409.1,214.4 405.0,212.8 403.4,213.6 402.2,211.4 403.6,210.6 405.3,210.5 404.1,209.9 402.2,210.0 401.5,208.8 399.7,208.5ZM432.7,216.5 435.0,216.3 437.5,216.3 438.8,213.8 440.3,214.0 439.8,215.9 437.9,217.2 435.0,217.8ZM437.5,210.8 439.8,212.1 441.7,213.8 441.5,215.0 440.3,213.4 437.9,211.3ZM444.7,216.1 446.0,216.9 447.4,218.8 446.2,218.8 444.9,217.2ZM448.3,218.6 450.2,219.7 449.7,219.9ZM451.8,220.1 454.6,221.7 454.0,221.9 452.1,220.9ZM454.2,223.6 456.5,224.0 456.0,224.8 454.4,224.4ZM456.3,221.9 457.5,224.0 456.9,223.6 456.1,222.0ZM457.5,225.3 459.4,226.3 458.4,226.5ZM462.6,244.9 465.1,246.5 468.1,249.0 467.4,249.4 464.5,247.7 462.6,245.7ZM467.6,234.1 468.7,234.7 468.5,236.1 467.8,235.7ZM369.3,274.7 369.3,269.1 369.2,265.7 368.5,263.1 367.7,260.7 365.8,257.4 366.4,256.1 366.7,254.8 366.2,252.9 366.9,251.1 367.7,248.4 367.7,249.8 369.5,248.1 372.5,246.0 376.1,245.3 378.8,244.5 381.7,242.7 383.0,240.6 384.4,237.5 385.7,239.3 385.7,237.5 387.2,236.9 388.1,235.3 388.7,233.9 392.1,232.2 393.7,233.5 394.4,234.5 396.0,234.5 396.9,233.1 397.9,231.6 399.5,229.7 400.7,229.2 402.6,229.0 401.5,227.4 402.8,227.7 404.5,228.4 405.9,228.9 407.4,229.0 409.3,228.8 410.8,229.2 411.2,229.5 409.3,231.6 409.1,232.9 408.1,234.2 409.1,235.5 410.6,236.3 412.5,237.3 414.2,238.3 416.1,239.9 418.5,239.6 419.6,236.9 420.0,234.7 420.0,232.7 420.4,230.1 420.5,228.8 421.0,226.9 421.7,226.3 422.4,227.9 423.0,229.4 423.6,231.8 424.5,233.5 425.5,233.1 427.0,234.6 426.9,235.6 427.9,238.5 428.5,239.7 429.9,243.2 432.6,244.7 434.4,247.0 436.9,249.6 437.4,251.1 438.4,252.6 440.5,254.5 441.5,255.5 441.9,258.0 442.0,260.1 442.5,261.4 442.9,262.8 442.3,264.6 442.0,266.4 440.7,271.3 437.9,274.7ZM410.1,232.3 411.0,232.1 411.0,233.3 410.1,233.1ZM398.1,228.0 399.8,227.5 400.7,227.9 399.8,228.6 398.4,228.4ZM441.9,254.4 442.3,255.0 441.9,256.7 441.6,256.1ZM260.0,13.3 256.0,13.0 252.5,12.2 249.9,8.9 248.3,5.9 249.9,2.2 251.2,-2.9 256.0,-3.6 256.9,1.6 258.4,7.7 260.7,11.3ZM252.2,-4.3 256.0,-4.9 264.5,-15.5 279.8,-29.6 276.0,-31.2 260.7,-23.1 255.0,-15.5ZM242.2,21.9 244.5,23.2 245.9,20.8 244.0,19.2ZM261.7,16.4 263.6,18.1 265.5,15.9 263.2,13.6ZM184.7,72.7 186.1,71.6 186.6,69.8 185.5,70.2 184.7,71.6ZM181.5,75.8 182.1,74.4 182.8,71.8 182.4,72.0 181.7,74.4ZM171.4,77.5 172.7,76.6 174.2,76.3 174.1,78.2 173.3,79.8 171.6,79.2ZM168.9,78.5 170.1,77.8 170.8,78.8 170.2,79.7 169.3,79.5ZM191.8,67.7 193.1,67.1 194.6,67.3 193.9,68.6 192.3,69.5 192.2,68.4ZM192.3,66.0 193.5,65.6 194.1,66.6 193.1,66.9ZM251.8,181.7 253.1,181.4 254.1,181.7 253.1,182.2ZM224.9,216.8 225.2,217.1 225.6,218.0 225.1,217.8ZM118.1,149.5 119.6,149.0 118.8,150.2ZM120.2,150.2 120.9,149.9 120.9,150.7ZM123.6,148.7 123.9,149.8 122.8,150.1ZM124.0,148.0 124.6,147.6 124.5,148.3ZM326.8,179.8 327.4,180.0 327.2,182.8 326.6,183.6 326.5,181.8ZM328.7,192.0 329.1,192.4 328.9,192.8ZM393.4,154.3 394.6,152.7 394.1,153.2ZM396.5,149.6 397.3,149.1 396.7,150.0ZM390.5,138.5 392.0,137.9 392.0,138.5 390.8,138.7ZM136.2,54.2 137.7,52.8 137.5,55.0ZM147.2,62.5 148.3,59.4 147.8,61.3ZM136.0,73.0 138.4,67.8 137.1,69.5 135.8,71.6Z"/>
<path fill="none" stroke="#c9aed0" stroke-opacity=".7" stroke-width=".5" stroke-linejoin="round" d="M146.1,134.3 147.0,136.9 148.0,140.3 144.5,141.9 143.2,143.9 139.8,146.1 133.7,148.7 133.7,151.7 141.1,156.6 152.5,165.3 153.7,166.3 156.3,167.3 158.3,168.6 161.3,167.9 164.5,165.3 173.1,159.7 169.3,157.6 168.2,154.1 169.1,150.2 168.3,145.2 167.4,141.2 164.5,137.1 166.1,134.6 166.6,130.1M133.7,150.9 125.2,150.9M133.7,154.5 127.4,154.5 127.4,159.8 125.5,160.8 125.3,164.2 118.0,164.2M141.1,156.6 137.9,156.6 139.6,173.9 139.8,175.9 132.5,175.9 128.3,175.7 127.0,177.4 124.9,174.7 122.6,173.6 118.8,174.8M127.0,177.4 128.5,182.0 133.7,183.7 135.0,186.3 139.8,185.9 141.9,182.6 143.6,180.4 146.4,178.5 150.6,177.0 152.0,177.0 156.9,176.1 158.3,173.1 158.3,168.6M118.4,182.1 121.7,181.4 124.2,181.5 128.5,182.0M118.3,179.6 120.7,179.6 124.0,180.0 120.9,180.1 118.3,180.6M121.7,184.9 124.2,183.4 124.2,181.5M124.9,188.6 126.4,186.8 128.9,186.7 130.6,189.6 128.3,192.5M130.6,189.6 132.2,189.7 132.5,191.7 134.1,191.3 134.4,193.6 136.0,194.7 135.9,197.4M134.1,191.3 135.0,189.6 135.0,186.3M139.8,185.9 141.3,187.2 145.1,187.6 145.5,190.1 144.2,192.8 145.0,196.1M145.1,187.6 144.9,184.7 148.9,184.7 150.2,184.5 152.0,184.7 154.8,183.0 154.2,181.4 152.0,179.6 150.6,177.0M150.2,184.5 150.1,185.5 151.2,187.6 151.6,189.9 151.3,192.6 152.5,194.2M152.0,184.7 151.8,186.7 152.9,188.0 153.4,192.6 153.7,193.9M157.1,183.4 157.3,186.1 155.5,188.6 155.4,193.6M157.1,183.4 157.9,179.8 163.6,180.8 169.3,180.4 176.2,179.5 177.3,181.8 178.1,183.7 176.5,184.7 173.5,189.7 171.8,193.2 169.7,192.6 166.6,196.6M157.1,183.4 154.8,183.0M176.2,179.5 179.8,173.1 179.8,164.9 178.8,160.8 196.0,167.9 196.0,166.9 197.9,166.9 197.9,162.8 197.9,147.6 198.2,142.4M178.8,160.8 177.3,161.6 173.1,159.7M197.9,162.8 220.5,162.8M196.0,167.9 196.0,175.5 193.9,175.9 192.2,180.8 193.9,184.7 186.4,188.6 179.8,191.5 176.9,186.7 178.8,186.7 177.3,181.8M179.8,191.5 177.7,194.4 178.1,196.5 180.3,199.9 181.1,201.6 175.6,201.6 171.8,201.6 171.8,203.9 168.9,203.9M171.8,201.6 168.9,201.4M175.6,201.6 177.7,203.3 176.7,206.2 177.9,209.4 174.1,210.2 172.3,211.1 171.4,213.2M181.1,201.6 185.7,199.1 185.5,197.6 187.4,196.1 192.9,198.0 196.9,196.1 202.4,196.0 204.3,197.6 209.1,199.1M193.9,184.7 195.2,189.0 202.4,196.0M195.2,189.0 196.9,189.2 199.8,186.3 203.4,187.4 205.5,187.2 208.9,187.1 211.0,186.1 213.5,185.3 213.5,182.4 214.8,187.6 215.2,189.4M223.8,170.9 220.7,172.9 219.6,176.9 219.8,178.3 219.0,181.4 217.1,183.2 215.6,185.5 215.2,189.4 213.1,190.5 215.0,194.4 218.6,197.0 222.6,198.9 225.5,199.3 230.1,198.3 235.9,196.5 241.6,190.5 234.1,188.6 231.8,184.7 229.9,184.7 231.0,181.8 228.3,178.7 226.4,177.9 223.6,178.1 222.4,177.1 219.8,178.3M231.0,181.8 232.3,181.4M232.5,183.8 231.8,184.7M230.1,198.3 228.3,200.5 228.3,207.4 229.4,208.9M224.9,214.7 222.1,211.6 215.0,207.7M215.0,205.6 216.0,203.7 216.7,201.0 215.0,197.8 218.6,197.0M215.0,197.8 213.1,198.4 209.1,199.1 208.9,201.4 209.9,201.8 207.2,204.3 206.6,207.5 206.6,208.5 208.3,207.8 208.9,207.7M206.6,208.5 205.5,210.9 205.9,212.1M208.9,207.7 208.3,210.4 208.9,212.1 208.2,214.2 206.2,214.3M205.5,210.9 207.2,210.9 208.3,210.4M173.7,217.2 175.2,217.0 181.9,217.1 181.9,219.2 187.4,219.2 188.9,219.2 191.8,219.7 192.2,221.1 191.8,224.0 192.7,225.9 192.5,227.3 196.0,226.7 196.0,230.8 192.2,230.8 192.2,237.1 194.8,239.9 191.0,240.7 185.5,239.5 176.9,239.5 172.6,239.2M173.5,215.3 175.0,214.6 177.7,215.1 177.7,214.0 180.5,213.4 181.1,210.0 184.2,206.8 184.5,202.9 185.7,199.1M173.1,216.8 175.2,217.0M196.0,226.7 198.4,227.3 199.8,228.6 201.7,228.8 204.3,229.8 205.5,231.6 207.0,231.6 207.0,229.1 204.3,228.8 204.3,223.6 204.9,222.0 208.8,221.5 212.9,223.8 213.1,224.2M213.1,224.2 213.7,226.5 213.7,229.6 212.5,232.0 213.5,232.7 207.8,234.3 208.2,235.9 205.3,236.7 201.7,240.6 198.3,240.3 194.8,239.9M213.1,224.2 214.9,224.0M216.8,227.9 218.8,228.0 222.6,227.5 227.3,225.9M216.2,228.0 215.8,229.2 216.9,231.8 218.6,234.5 217.5,238.3 215.8,236.9 215.6,233.5 213.5,232.7M208.2,235.9 211.2,237.7 213.1,240.7 212.5,242.7 212.2,247.3 209.9,249.6 211.0,253.7 210.8,257.0 211.4,258.8 212.9,258.9M198.3,240.3 200.2,244.5 203.0,245.7 206.2,249.2 209.9,249.6M206.2,249.2 201.7,252.2 198.8,256.5 194.1,255.6 189.9,258.9 188.3,254.6 188.3,248.8 190.2,248.8 190.2,241.3 194.8,239.9M188.3,254.6 188.3,262.3 183.6,262.9 181.6,262.8M210.8,257.0 209.3,256.5 208.9,258.8 209.9,259.9 211.4,258.8M201.7,264.9 204.7,262.7 206.2,264.4 204.0,266.4 201.7,264.9M133.4,117.8 134.8,117.9 137.7,117.6 138.4,118.5 137.1,120.0 137.2,122.0 136.9,123.4 136.0,123.4 136.9,125.3 136.3,126.5 136.9,127.0 136.0,128.5 136.2,129.4M146.8,114.0 148.9,115.2 151.6,115.7 153.5,116.2 156.2,116.4M155.1,92.2 156.2,93.1 158.2,95.7 159.5,95.1 161.3,96.8 162.3,97.1 165.9,98.4 164.7,102.4 163.4,103.3 161.9,106.2 163.3,107.4 163.8,108.5 162.9,109.3 163.6,110.4 163.4,111.4 164.9,111.9 164.5,112.9M163.3,107.4 165.3,107.0 166.3,105.7 167.4,107.3 168.0,105.5 170.2,104.5 171.2,104.8 173.5,104.0 173.9,105.0 176.3,105.5 178.0,105.8 180.9,104.5 181.7,102.7 182.9,101.3 182.5,99.6 178.8,98.4 178.2,99.6 176.6,99.1 175.8,100.2 174.6,100.9 175.0,102.7 173.5,102.4 170.2,102.6 168.5,102.6 166.6,102.2 164.7,102.4M168.5,102.6 168.5,104.0 170.2,104.5M164.0,85.5 163.7,87.6 163.0,87.7 163.7,88.7 163.0,89.8 161.7,89.9 162.1,91.3 161.7,93.3 162.4,94.5 162.0,95.1 162.6,96.1 162.3,97.1M156.7,91.4 158.3,91.4 159.8,91.1 161.4,92.1 161.1,93.3 161.7,93.3M166.7,80.2 168.2,80.5M177.4,83.4 177.7,85.4 177.2,86.8 178.1,87.7 178.3,90.7 178.5,92.9 177.5,92.4 175.0,94.2 173.3,94.6 174.1,95.8 174.8,97.6 176.6,99.1M178.5,92.9 181.3,93.6 182.4,94.3 184.0,94.6 186.2,97.0 188.5,97.9 193.2,98.2 193.5,96.7 195.2,94.3 196.2,93.0 195.3,91.0 195.2,87.6 195.0,83.3 193.7,81.9 187.6,81.7M186.2,97.0 184.3,98.7 182.5,99.6M193.7,81.9 193.8,80.2 190.8,79.0M190.3,76.2 193.1,75.1 197.7,75.1 200.9,77.6 198.8,82.1 195.0,83.3M196.6,69.9 199.8,70.0 202.3,71.1 203.0,72.0 204.0,76.0 200.9,77.6M203.7,64.2 202.4,66.6 202.6,68.4 202.3,71.1M203.2,60.0 205.9,57.0 210.2,50.5 207.4,46.9 208.4,45.4 206.6,41.8 207.6,38.2 205.7,32.5 206.1,29.1 204.5,26.0 204.3,22.4 205.4,21.6 209.0,18.9 208.9,17.5M205.4,21.6 203.4,16.0 200.7,17.0 199.2,20.8 197.7,24.0 192.9,23.4 190.2,21.6 189.4,21.5 192.2,25.0 195.3,27.3 195.0,31.0 196.0,33.0 195.8,36.1 196.2,37.7M189.4,21.5 188.3,25.0 184.7,24.5 184.3,27.0 180.9,30.1 179.6,35.4 177.9,36.3 177.9,40.0 176.3,43.2 177.1,43.9 175.6,45.6 173.4,47.5 173.5,53.0 173.7,55.0 174.7,56.8 173.5,58.2 174.2,60.5 172.8,62.6 172.5,65.8 172.1,66.2M204.0,76.0 209.1,77.8 208.9,80.5 212.5,85.0 209.9,86.0 210.8,89.1 208.5,91.6 202.1,90.7 198.4,89.8 195.3,91.0M210.8,89.1 215.8,90.1 218.1,94.3 222.6,95.8 226.6,96.7 226.1,101.9 223.2,102.4 223.0,103.9M193.2,98.2 192.4,100.2 193.9,101.3 197.7,102.2 200.9,100.6 202.6,100.0 205.7,101.5 207.6,105.8 205.4,106.1 204.0,108.4 206.7,108.7M200.9,100.6 204.0,108.4M192.4,100.2 189.9,99.7 186.1,101.9 182.9,101.3M180.9,104.5 181.9,105.7 184.2,107.4 186.2,107.2 188.8,106.6 190.6,105.8 193.9,101.3M188.8,106.6 191.0,110.0 193.1,110.4 193.5,111.8 192.9,115.4 193.9,114.4M193.5,111.8 198.8,113.2 201.7,112.0 204.7,113.0M176.2,108.4 179.4,108.4 181.9,105.7M180.3,109.1 182.4,108.9 186.4,110.0 187.2,109.9 187.6,112.3 186.8,113.6 185.5,116.2M186.4,110.0 186.2,107.2M187.2,117.9 188.5,115.9 189.5,117.8 189.3,119.3 190.2,120.4 189.7,122.3 188.3,123.3M190.2,120.4 194.0,119.2 196.5,118.8 200.4,118.3 199.9,120.7M192.9,116.7 194.0,119.2M200.4,118.3 202.6,117.5 203.6,117.5M226.3,113.9 231.2,114.4 234.1,115.9 238.6,117.8 239.2,119.3 242.8,117.9M229.4,118.8 233.1,119.8 236.0,119.3 239.2,119.3M233.1,119.8 233.5,122.3 235.6,123.3 238.8,125.3 241.7,123.3 243.3,126.4M235.6,123.3 234.1,124.0 234.8,126.5 235.6,129.4 237.9,132.7 236.7,136.9 238.1,139.2 241.1,143.6 242.7,146.0M219.1,132.2 220.2,130.3 222.6,130.3 226.4,130.3 230.9,129.6 235.6,129.4M218.7,135.4 220.0,136.4 218.6,138.2 218.2,139.8 220.3,140.7 224.2,138.2 228.3,135.9 228.7,131.5 230.9,129.6M217.1,138.9 218.2,139.8 218.0,142.5 216.8,147.0M215.5,143.2 216.8,147.0M216.8,147.0 219.0,147.6 221.7,145.9 220.7,142.5 224.2,141.4 224.9,141.1 224.2,138.2M224.9,141.1 227.2,141.6 230.4,143.4 235.4,147.6 238.9,147.8 240.6,148.0 241.1,145.9 241.6,145.9M240.6,148.0 241.1,149.1 242.4,149.0M247.0,157.1 248.5,158.3M248.5,158.3 250.4,160.9 255.3,161.4 256.2,162.8 255.0,166.9 249.3,168.9 243.8,169.7 242.1,170.6 238.5,172.4 232.9,171.9 232.5,173.6 231.8,174.1M249.3,168.9 251.4,173.6M256.2,162.8 255.4,161.4 256.9,158.6 257.1,157.1 257.6,156.7M267.6,156.2 268.0,154.1 270.6,153.1 269.9,149.8 266.2,146.2 268.0,143.6 266.2,142.5 265.6,137.8 266.8,133.2 266.6,130.7M266.2,146.2 269.3,147.2 276.3,146.2 276.5,143.9 282.2,141.6 282.6,138.9 284.2,138.5 285.7,136.8 286.7,131.0 292.9,129.2 294.6,132.2M266.6,130.7 270.1,133.9 273.1,131.5 275.2,128.8 279.4,129.4 282.2,129.6 286.6,130.6 286.4,127.7 289.9,128.8 292.9,129.2M252.9,129.0 257.5,127.2 261.5,128.4 265.2,130.7 266.6,130.7M251.2,117.5 253.5,116.6 256.9,119.3 256.9,109.6 261.8,108.1 266.6,111.5 268.3,113.6 273.9,113.1 276.2,115.0 276.0,117.5 277.3,119.7 280.0,119.9 281.7,119.0 284.0,117.2 285.4,116.9 285.5,116.1 290.2,116.3 291.6,114.4 294.4,115.4 301.1,115.4 303.1,117.0M256.9,119.3 258.8,119.4 261.9,115.7 264.5,117.0 268.2,119.8 269.1,122.5 272.5,125.1 277.0,127.4 276.9,129.0M303.1,117.0 303.0,117.4 299.8,120.0 296.7,120.0 295.0,121.5 291.0,123.8 290.4,123.9 290.8,126.0 292.7,126.2 292.9,129.2M279.4,129.4 279.8,125.1 284.5,123.5 285.1,122.0 282.2,120.5 284.7,120.3 286.8,118.8 289.5,120.4 287.0,122.0 290.4,123.9M242.4,105.5 239.6,100.5 239.8,97.9 242.4,95.9 243.0,93.7 247.0,90.4 254.1,92.5 260.3,92.2 267.2,93.1 264.5,89.8 266.4,86.3 267.0,83.4 274.4,82.1 280.2,79.8 285.1,78.8 285.9,82.8 290.2,83.1 296.5,81.8 296.0,83.4 302.4,93.1 309.1,92.5 312.5,96.7 316.5,97.9M316.5,97.9 313.1,100.7 313.5,103.9 308.3,103.6 307.0,108.3 303.2,109.6 304.1,114.4 303.1,117.0M316.5,97.9 317.5,97.9 318.2,99.9 321.7,101.6 323.6,105.2 323.4,109.1 332.0,111.5 333.9,115.7 344.1,116.2 350.2,118.5 359.8,115.9 363.4,113.1 362.4,111.2 366.6,110.3 373.9,105.2 378.6,104.8 372.5,95.9 374.6,97.0M317.5,97.9 321.1,95.8 326.1,93.1 329.9,93.7 335.6,96.2 337.5,94.0 336.5,92.5 338.6,89.1 344.9,91.6 345.1,93.7 353.5,94.6 359.8,97.9 365.5,96.7 372.5,95.9M374.6,97.0 377.5,94.5 380.3,87.6 378.8,87.0 385.7,84.6 389.5,86.2 393.1,96.1 399.2,98.7 399.8,102.2 406.8,100.5 403.8,109.3 401.5,108.8 399.8,109.9 400.3,113.9 399.0,116.5M399.0,116.5 397.7,115.0 394.1,117.5 394.6,118.5 392.0,118.0 387.1,122.8M390.4,128.0 392.1,126.7 394.7,126.0M280.2,159.3 281.1,158.1 283.6,158.3 285.5,157.9 284.7,155.1 283.8,153.4 282.6,152.4 284.3,150.2 287.2,150.3 289.3,147.6 291.0,145.0 292.3,143.4 292.2,141.4 293.9,140.7 291.2,138.7 291.0,135.4 296.5,135.4 298.4,133.4M294.6,132.2 298.4,133.4 300.5,136.2 299.6,140.1 300.2,143.0 304.5,145.3 302.8,148.5 308.9,151.6 313.7,153.2 318.1,153.6 318.1,150.4 319.4,150.1 319.6,151.7 321.3,153.0 325.7,152.7 324.8,150.7 328.9,148.5 332.0,147.9 335.7,149.7M304.5,145.3 306.8,145.6 310.6,148.3 314.1,150.4 318.1,150.4M318.1,153.6 318.6,153.4 319.6,151.7M320.0,162.6 319.4,158.3 318.1,156.8 318.6,153.4 321.3,154.5 321.4,156.0 326.2,156.6 324.0,159.5 326.1,159.3 326.6,164.3M335.7,149.7 333.3,151.9 331.4,154.5 330.4,156.2 330.6,158.7 328.0,158.6 328.1,160.8 326.6,164.3 326.1,165.5M335.7,149.7 338.2,151.1 338.2,154.7 336.1,158.7 338.6,158.4 339.2,162.5 341.1,164.0 342.9,163.8M342.9,163.8 340.9,166.2 336.9,167.3 335.7,169.8 338.2,174.3 337.3,176.7 339.1,179.5 340.0,183.2 338.3,185.9 338.1,186.8M340.9,166.2 341.8,167.9 343.1,167.8 342.8,171.9 344.7,170.5 348.3,170.3 349.8,173.9 351.4,175.5 351.3,177.8 350.6,178.3 346.2,178.5 345.2,179.7 346.2,183.5M342.9,163.8 344.1,164.6 344.8,162.0 346.4,161.9 349.9,161.1 350.9,160.0 353.5,161.2 353.5,162.8 356.0,163.9M344.8,162.0 346.2,163.4 348.5,165.0 349.5,167.7 348.1,168.3 350.6,169.7 355.0,174.5 355.1,177.5 353.1,177.7 351.3,177.8M355.1,177.5 355.0,182.2 351.9,183.6 352.5,185.1 349.3,185.9M340.9,193.5 342.8,195.0 344.1,194.8 344.7,193.9M359.1,201.8 360.8,204.2 363.8,203.0 366.7,203.4 369.0,201.5 370.5,197.8 374.2,197.9M418.8,210.8 418.8,223.3M386.5,223.7 388.3,223.6 388.2,222.9M-0.2,215.2 1.0,212.3 4.3,210.8 7.0,207.6 6.3,206.0 4.9,205.0 2.8,205.0 0.2,203.0M7.0,207.6 10.1,208.2 11.4,210.4 16.8,210.9 15.6,213.0 17.0,213.8 11.4,215.6 9.4,219.8 11.3,223.2 12.7,224.9 15.8,224.0 15.8,226.9 17.8,226.8 19.5,229.8 18.8,234.3 17.7,239.3 16.2,241.4M17.0,213.8 18.1,207.9 16.8,204.7 18.6,204.6 17.2,202.6 22.4,203.5 22.9,203.4M12.7,184.4 11.2,188.0 12.2,191.5 13.1,192.4 16.7,192.4 21.8,194.0 21.0,197.2 22.1,199.3 21.0,200.5 22.9,203.4 25.5,204.4 28.2,202.7 28.3,201.0 30.4,198.7 27.2,198.0 32.4,197.9 34.5,195.9M36.0,189.5 33.3,194.4 34.5,195.9 36.1,196.2 36.8,198.3 36.1,201.2 38.3,203.5 42.6,202.2 46.3,201.3 49.9,201.5 51.9,198.1M41.2,195.3 39.7,198.2 42.6,202.2M47.4,194.9 46.5,197.2 46.3,201.3M17.8,226.8 25.7,224.4 25.9,228.2 30.6,230.8 35.0,232.3 35.6,237.2 39.1,237.3 40.7,241.1 39.5,244.3 40.1,246.1 39.9,249.0 44.2,249.4 46.9,253.0 46.3,256.3 48.1,257.5 44.1,262.0 40.5,266.2M17.7,239.3 19.3,245.5 21.0,250.5 22.6,250.8 24.1,248.4 27.8,250.5 30.9,249.3 32.6,251.2 39.4,244.3M21.0,250.5 20.0,254.0 20.2,259.0 17.5,262.3 16.9,266.6M30.9,249.3 40.5,255.6 38.6,259.9 42.6,260.3 46.3,256.3M13.6,170.9 13.7,167.5M2.9,189.2 1.9,192.0M21.1,103.9 18.4,102.9 16.9,105.0 16.3,107.2 14.1,109.6 8.0,109.6 4.0,113.3 -0.6,113.7M21.1,103.9 21.1,107.7 22.4,109.3"/>
<path fill="#aad3df" d="M205.7,119.5 208.0,119.5 210.8,118.9 214.5,117.5 217.2,117.4 219.5,119.3 222.4,120.0 225.9,120.0 227.4,119.9 229.5,118.4 229.6,117.1 228.3,114.9 225.9,113.3 224.6,112.0 222.2,110.4 221.3,109.9 220.0,109.1 221.5,108.7 222.9,106.8 223.1,105.0 225.1,103.6 221.8,104.0 220.3,104.8 217.7,105.8 216.5,106.5 217.7,108.8 219.7,108.7 217.7,109.5 216.8,110.1 215.3,111.0 214.0,110.7 212.2,108.7 214.2,106.6 212.9,106.6 210.2,105.4 208.8,105.7 208.2,106.8 206.7,109.1 204.8,111.8 203.5,114.4 202.6,116.2 203.7,117.9ZM200.2,122.3 201.1,121.3 202.6,120.2 205.3,120.0 207.2,120.7 205.5,121.5 203.5,121.7 201.1,121.7ZM243.6,105.8 241.7,107.2 240.5,108.8 239.2,110.7 240.3,113.1 240.7,115.0 242.2,117.4 243.6,119.3 244.8,121.0 246.2,121.5 245.3,121.8 244.3,122.7 244.2,124.3 243.3,125.6 243.3,126.4 244.4,128.7 246.7,130.0 248.2,130.6 250.5,130.5 253.1,130.2 252.9,129.0 252.7,126.2 251.4,123.9 252.2,122.7 251.0,122.5 251.0,120.3 254.1,120.8 254.4,118.8 252.9,117.2 251.0,118.5 250.2,118.1 250.2,115.4 247.7,113.2 246.0,110.8 247.4,110.7 248.0,108.8 249.3,108.5 251.2,108.8 252.7,108.0 251.6,106.1 251.2,104.4 249.1,104.1 245.5,105.0ZM261.3,107.2 261.1,110.7 262.1,113.1 263.6,110.2 263.8,107.2 266.1,106.9 267.0,105.0 264.5,105.2ZM290.2,108.3 291.6,109.9 294.1,105.8 297.9,105.7 301.1,106.1 300.7,104.7 296.0,104.7 292.7,104.7 290.8,106.3ZM348.0,90.7 351.2,91.0 356.0,86.3 359.4,80.5 359.6,77.2 357.9,78.8 355.0,84.1 351.2,87.9ZM207.4,62.1 210.2,62.3 212.9,59.4 211.2,56.2 208.3,55.4 207.4,58.2ZM216.0,58.2 218.8,58.6 219.8,55.4 217.3,50.9 216.0,52.2 216.9,55.0ZM173.9,66.2 175.6,68.0 176.9,66.2 176.0,64.5ZM210.6,207.5 212.2,205.4 214.8,205.0 216.2,206.4 215.0,208.1 214.2,210.4 212.7,211.3 210.8,210.6ZM206.1,212.3 207.0,214.4 207.2,217.2 209.1,221.1 209.5,222.6 208.2,221.9 206.1,217.8 205.7,214.4ZM214.8,224.2 216.0,225.9 216.3,228.8 217.3,231.8 217.3,233.5 216.2,233.1 215.6,229.8 215.0,226.9ZM13.9,185.3 15.0,187.0 13.9,188.4 13.1,187.2Z"/>
</svg>
<svg width="469" height="265.5" viewBox="0 0 469 265.5" style="position:absolute;left:0;top:0">
<circle cx="283.0" cy="94.0" r="9.4" fill="#ffff00" fill-opacity=".76" stroke="#ffff00" stroke-opacity=".85" stroke-width="1"/>
<circle cx="353.3" cy="103.0" r="9.4" fill="#ffff00" fill-opacity=".76" stroke="#ffff00" stroke-opacity=".85" stroke-width="1"/>
<circle cx="184.5" cy="114.3" r="9.4" fill="#ff7e00" fill-opacity=".76" stroke="#ff7e00" stroke-opacity=".85" stroke-width="1"/>
<circle cx="294.3" cy="114.9" r="9.4" fill="#4c0026" fill-opacity=".76" stroke="#4c0026" stroke-opacity=".85" stroke-width="1"/>
<circle cx="296.0" cy="115.4" r="9.4" fill="#99004c" fill-opacity=".76" stroke="#99004c" stroke-opacity=".85" stroke-width="1"/>
<circle cx="191.5" cy="116.9" r="9.4" fill="#ffff00" fill-opacity=".76" stroke="#ffff00" stroke-opacity=".85" stroke-width="1"/>
<circle cx="384.8" cy="119.0" r="9.4" fill="#ffff00" fill-opacity=".76" stroke="#ffff00" stroke-opacity=".85" stroke-width="1"/>
<circle cx="280.7" cy="119.4" r="9.4" fill="#ff0000" fill-opacity=".76" stroke="#ff0000" stroke-opacity=".85" stroke-width="1"/>
<circle cx="371.4" cy="123.7" r="9.4" fill="#ffff00" fill-opacity=".76" stroke="#ffff00" stroke-opacity=".85" stroke-width="1"/>
<circle cx="280.3" cy="126.5" r="9.4" fill="#99004c" fill-opacity=".76" stroke="#99004c" stroke-opacity=".85" stroke-width="1"/>
<circle cx="261.4" cy="128.6" r="9.4" fill="#ff0000" fill-opacity=".76" stroke="#ff0000" stroke-opacity=".85" stroke-width="1"/>
<circle cx="155.8" cy="130.9" r="9.4" fill="#ffff00" fill-opacity=".76" stroke="#ffff00" stroke-opacity=".85" stroke-width="1"/>
<circle cx="279.7" cy="137.1" r="9.4" fill="#ff0000" fill-opacity=".76" stroke="#ff0000" stroke-opacity=".85" stroke-width="1"/>
<circle cx="289.7" cy="137.6" r="9.4" fill="#ff0000" fill-opacity=".76" stroke="#ff0000" stroke-opacity=".85" stroke-width="1"/>
<circle cx="234.6" cy="138.8" r="9.4" fill="#ff7e00" fill-opacity=".76" stroke="#ff7e00" stroke-opacity=".85" stroke-width="1"/>
<circle cx="219.0" cy="142.0" r="9.4" fill="#7e7e7e" fill-opacity=".76" stroke="#7e7e7e" stroke-opacity=".85" stroke-width="1"/>
<circle cx="291.4" cy="142.9" r="9.4" fill="#99004c" fill-opacity=".76" stroke="#99004c" stroke-opacity=".85" stroke-width="1"/>
<circle cx="380.6" cy="144.0" r="9.4" fill="#ffff00" fill-opacity=".76" stroke="#ffff00" stroke-opacity=".85" stroke-width="1"/>
<circle cx="241.6" cy="147.8" r="9.4" fill="#ff7e00" fill-opacity=".76" stroke="#ff7e00" stroke-opacity=".85" stroke-width="1"/>
<circle cx="296.3" cy="149.3" r="9.4" fill="#99004c" fill-opacity=".76" stroke="#99004c" stroke-opacity=".85" stroke-width="1"/>
<circle cx="312.1" cy="151.0" r="9.4" fill="#ff7e00" fill-opacity=".76" stroke="#ff7e00" stroke-opacity=".85" stroke-width="1"/>
<circle cx="247.0" cy="154.8" r="9.4" fill="#ff7e00" fill-opacity=".76" stroke="#ff7e00" stroke-opacity=".85" stroke-width="1"/>
<circle cx="238.4" cy="157.4" r="9.4" fill="#7e7e7e" fill-opacity=".76" stroke="#7e7e7e" stroke-opacity=".85" stroke-width="1"/>
<circle cx="254.9" cy="157.4" r="9.4" fill="#ffff00" fill-opacity=".76" stroke="#ffff00" stroke-opacity=".85" stroke-width="1"/>
<circle cx="277.5" cy="157.4" r="9.4" fill="#ff7e00" fill-opacity=".76" stroke="#ff7e00" stroke-opacity=".85" stroke-width="1"/>
<circle cx="322.3" cy="158.9" r="9.4" fill="#ff0000" fill-opacity=".76" stroke="#ff0000" stroke-opacity=".85" stroke-width="1"/>
<circle cx="365.2" cy="161.0" r="9.4" fill="#ffff00" fill-opacity=".76" stroke="#ffff00" stroke-opacity=".85" stroke-width="1"/>
<circle cx="317.4" cy="162.1" r="9.4" fill="#ff0000" fill-opacity=".76" stroke="#ff0000" stroke-opacity=".85" stroke-width="1"/>
<circle cx="224.6" cy="164.2" r="9.4" fill="#ff7e00" fill-opacity=".76" stroke="#ff7e00" stroke-opacity=".85" stroke-width="1"/>
<circle cx="351.1" cy="165.3" r="9.4" fill="#ff0000" fill-opacity=".76" stroke="#ff0000" stroke-opacity=".85" stroke-width="1"/>
<circle cx="288.2" cy="169.1" r="9.4" fill="#ff0000" fill-opacity=".76" stroke="#ff0000" stroke-opacity=".85" stroke-width="1"/>
<circle cx="345.2" cy="171.3" r="9.4" fill="#ffff00" fill-opacity=".76" stroke="#ffff00" stroke-opacity=".85" stroke-width="1"/>
<circle cx="299.5" cy="172.3" r="9.4" fill="#ff0000" fill-opacity=".76" stroke="#ff0000" stroke-opacity=".85" stroke-width="1"/>
<circle cx="332.6" cy="173.4" r="9.4" fill="#ffff00" fill-opacity=".76" stroke="#ffff00" stroke-opacity=".85" stroke-width="1"/>
<circle cx="211.6" cy="176.2" r="9.4" fill="#ffff00" fill-opacity=".76" stroke="#ffff00" stroke-opacity=".85" stroke-width="1"/>
<circle cx="302.7" cy="180.2" r="9.4" fill="#ff7e00" fill-opacity=".76" stroke="#ff7e00" stroke-opacity=".85" stroke-width="1"/>
<circle cx="134.8" cy="181.1" r="9.4" fill="#ff0000" fill-opacity=".76" stroke="#ff0000" stroke-opacity=".85" stroke-width="1"/>
<circle cx="178.7" cy="182.3" r="9.4" fill="#ff7e00" fill-opacity=".76" stroke="#ff7e00" stroke-opacity=".85" stroke-width="1"/>
<circle cx="19.2" cy="183.0" r="9.4" fill="#00e400" fill-opacity=".76" stroke="#00e400" stroke-opacity=".85" stroke-width="1"/>
<circle cx="352.8" cy="185.1" r="9.4" fill="#ffff00" fill-opacity=".76" stroke="#ffff00" stroke-opacity=".85" stroke-width="1"/>
<circle cx="123.7" cy="187.7" r="9.4" fill="#ffff00" fill-opacity=".76" stroke="#ffff00" stroke-opacity=".85" stroke-width="1"/>
<circle cx="223.5" cy="188.8" r="9.4" fill="#00e400" fill-opacity=".76" stroke="#00e400" stroke-opacity=".85" stroke-width="1"/>
<circle cx="301.6" cy="192.0" r="9.4" fill="#ffff00" fill-opacity=".76" stroke="#ffff00" stroke-opacity=".85" stroke-width="1"/>
<circle cx="149.7" cy="195.3" r="9.4" fill="#ff7e00" fill-opacity=".76" stroke="#ff7e00" stroke-opacity=".85" stroke-width="1"/>
<circle cx="142.2" cy="195.4" r="9.4" fill="#7e7e7e" fill-opacity=".76" stroke="#7e7e7e" stroke-opacity=".85" stroke-width="1"/>
<circle cx="9.0" cy="197.1" r="9.4" fill="#7e7e7e" fill-opacity=".76" stroke="#7e7e7e" stroke-opacity=".85" stroke-width="1"/>
<circle cx="211.8" cy="203.9" r="9.4" fill="#7e7e7e" fill-opacity=".76" stroke="#7e7e7e" stroke-opacity=".85" stroke-width="1"/>
<circle cx="352.0" cy="217.0" r="9.4" fill="#ffff00" fill-opacity=".76" stroke="#ffff00" stroke-opacity=".85" stroke-width="1"/>
<circle cx="4.1" cy="229.1" r="9.4" fill="#00e400" fill-opacity=".76" stroke="#00e400" stroke-opacity=".85" stroke-width="1"/>
<circle cx="240.8" cy="241.3" r="9.4" fill="#ffff00" fill-opacity=".76" stroke="#ffff00" stroke-opacity=".85" stroke-width="1"/>
</svg>
<span class="ml" style="left:140.8px;top:125.3px">55</span>
<span class="ml" style="left:169.5px;top:108.7px">116</span>
<span class="ml" style="left:204.0px;top:136.4px">N/A</span>
<span class="ml" style="left:219.6px;top:133.2px">146</span>
<span class="ml" style="left:226.6px;top:142.2px">143</span>
<span class="ml" style="left:223.4px;top:151.8px">N/A</span>
<span class="ml" style="left:239.9px;top:151.8px">97</span>
<span class="ml" style="left:209.6px;top:158.6px">125</span>
<span class="ml" style="left:246.4px;top:123.0px">152</span>
<span class="ml" style="left:196.6px;top:170.6px">79</span>
<span class="ml" style="left:208.5px;top:183.2px">50</span>
<span class="ml" style="left:196.8px;top:198.3px">N/A</span>
<span class="ml" style="left:163.7px;top:176.7px">123</span>
<span class="ml" style="left:119.8px;top:175.5px">152</span>
<span class="ml" style="left:108.7px;top:182.1px">80</span>
<span class="ml" style="left:134.7px;top:189.7px">111</span>
<span class="ml" style="left:338.3px;top:97.4px">97</span>
<span class="ml" style="left:268.0px;top:88.4px"></span>
<span class="ml" style="left:279.3px;top:109.3px">330</span>
<span class="ml" style="left:265.7px;top:113.8px">163</span>
<span class="ml" style="left:264.7px;top:131.5px">168</span>
<span class="ml" style="left:297.1px;top:145.4px">128</span>
<span class="ml" style="left:262.5px;top:151.8px">133</span>
<span class="ml" style="left:302.4px;top:156.5px">157</span>
<span class="ml" style="left:284.5px;top:166.7px">173</span>
<span class="ml" style="left:287.7px;top:174.6px">140</span>
<span class="ml" style="left:286.6px;top:186.4px">63</span>
<span class="ml" style="left:317.6px;top:167.8px">87</span>
<span class="ml" style="left:330.2px;top:165.7px">76</span>
<span class="ml" style="left:336.1px;top:159.7px">167</span>
<span class="ml" style="left:350.2px;top:155.4px">77</span>
<span class="ml" style="left:337.8px;top:179.5px">72</span>
<span class="ml" style="left:356.4px;top:118.1px">66</span>
<span class="ml" style="left:369.8px;top:113.4px">97</span>
<span class="ml" style="left:365.6px;top:138.4px">99</span>
<span class="ml" style="left:337.0px;top:211.4px">85</span>
<span class="ml" style="left:225.8px;top:235.7px">52</span>
<span class="ml" style="left:4.2px;top:177.4px">18</span>
<span class="ml" style="left:-6.0px;top:191.5px">N/A</span>
<span class="ml" style="left:-10.9px;top:223.5px">29</span>
<span class="ml" style="left:276.4px;top:137.3px">257</span>
<span class="ml" style="left:176.5px;top:111.3px">51</span>
<span class="ml" style="left:127.2px;top:189.8px">N/A</span>
<span class="ml" style="left:281.0px;top:109.8px">219</span>
<span class="ml" style="left:265.3px;top:120.9px">251</span>
<span class="ml" style="left:281.3px;top:143.7px">255</span>
<span class="ml" style="left:307.3px;top:153.3px">185</span>
<span class="ml" style="left:273.2px;top:163.5px">167</span>
<span class="ml" style="left:232.0px;top:149.2px">130</span>
<span class="ml" style="left:274.7px;top:132.0px">196</span>
<div class="tip"></div><div class="pop" style="left:258.8px;top:9.3px"><div class="pt">Bishkek<br>2020-12-31 7:00 PM<br>(LT)</div>
<div class="tb"><div class="c h1">Pollutant</div><div class="c h2">AQI</div><div class="c d1">PM2.5</div><div class="c d2">330</div></div></div>
<svg style="position:absolute;left:280.9px;top:98.5px" width="22" height="10" viewBox="0 0 22 10"><path d="M3.800 0.300L10.300 6.500L16.800 0.300Z" fill="#fff"/></svg>
</div>
<div class="abs sh" style="top:4.700px">Select a City</div>
<div class="abs sel" style="top:29.3px">Bishkek<span class="x">×</span><span class="a"></span></div>
<div class="abs sh" style="top:67.5px;height:23.8px;line-height:24.8px">Select a Parameter</div>
<div class="abs sel" style="top:92.3px">PM2.5<span class="x">×</span><span class="a"></span></div>
<div id="rss" class="abs"><b>Bishkek</b>
<svg class="abs" style="left:192px;top:17px" width="23" height="23" viewBox="0 0 23 23"><rect width="23" height="23" fill="#f0ad3c"/><circle cx="6" cy="17.200" r="2.400" fill="#fff"/><path d="M3.700 9.800a9.700 9.700 0 0 1 9.700 9.700M3.700 4.300a15.200 15.200 0 0 1 15.200 15.200" fill="none" stroke="#fff" stroke-width="3.100"/></svg>
</div>
<div id="note" class="abs">Note: Values above 500 are considered Beyond the AQI. Follow recommendations for the Hazardous category. Additional information on reducing exposure to extremely high levels of particle pollution is available <a>here</a>.</div>
<div class="abs tab" style="left:17.3px;width:71.5px;background:#fff;border:1px solid #bbb;border-top:1.6px solid #004a87;border-bottom:none;color:#222;height:20.2px;line-height:19.5px">AQI</div>
<div class="abs tab" style="left:90.7px;width:110.8px;background:#d2d2d2;color:#666;line-height:23.4px">Concentration</div>
<div class="abs tab" style="left:203.7px;width:92.5px;background:#d2d2d2;color:#666;line-height:23.4px">Historical</div>
<div id="tabline" class="abs"></div>
<div id="learn" class="abs">Learn more about how the Air Quality Index [AQI] is calculated from the EPA <a>here</a>.</div>
<div id="chart" class="abs">
<svg width="533.7" height="213" viewBox="0 0 533.7 213" style="position:absolute;left:0;top:0;font-family:'DejaVu Sans',Verdana,sans-serif">
<text x="266.7" y="16.5" text-anchor="middle" font-size="11.7" fill="#333">Bishkek – PM2.5</text>
<path d="M50.2 137.73H527.6" stroke="#e6e6e6" stroke-width="0.8"/>
<path d="M50.2 113.46H527.6" stroke="#e6e6e6" stroke-width="0.8"/>
<path d="M50.2 89.19H527.6" stroke="#e6e6e6" stroke-width="0.8"/>
<path d="M50.2 64.92H527.6" stroke="#e6e6e6" stroke-width="0.8"/>
<path d="M50.2 40.65H527.6" stroke="#e6e6e6" stroke-width="0.8"/>
<text x="40.3" y="164.6" text-anchor="end" font-size="7.2" fill="#222">0</text>
<text x="40.3" y="140.3" text-anchor="end" font-size="7.2" fill="#222">100</text>
<text x="40.3" y="116.1" text-anchor="end" font-size="7.2" fill="#222">200</text>
<text x="40.3" y="91.8" text-anchor="end" font-size="7.2" fill="#222">300</text>
<text x="40.3" y="67.5" text-anchor="end" font-size="7.2" fill="#222">400</text>
<text x="40.3" y="43.3" text-anchor="end" font-size="7.2" fill="#222">500</text>
<text transform="translate(20.2,99.0) rotate(-90)" text-anchor="middle" font-size="7.4" fill="#222">AQI</text>
<path d="M50.2 162.0H527.6" stroke="#ccd6eb" stroke-width="0.8"/>
<path d="M50.20 162.0v5.5M70.09 162.0v5.5M89.98 162.0v5.5M109.87 162.0v5.5M129.76 162.0v5.5M149.65 162.0v5.5M169.54 162.0v5.5M189.43 162.0v5.5M209.32 162.0v5.5M229.21 162.0v5.5M249.10 162.0v5.5M268.99 162.0v5.5M288.88 162.0v5.5M308.77 162.0v5.5M328.66 162.0v5.5M348.55 162.0v5.5M368.44 162.0v5.5M388.33 162.0v5.5M408.22 162.0v5.5M428.11 162.0v5.5M448.00 162.0v5.5M467.89 162.0v5.5M487.78 162.0v5.5M507.67 162.0v5.5M527.56 162.0v5.5" stroke="#ccd6eb" stroke-width="0.8" fill="none"/>
<rect x="55.30" y="104.97" width="9.7" height="57.03" fill="#99004c" stroke="#333" stroke-opacity=".85" stroke-width="0.7"/>
<rect x="75.19" y="94.04" width="9.7" height="67.96" fill="#99004c" stroke="#333" stroke-opacity=".85" stroke-width="0.7"/>
<rect x="95.08" y="100.11" width="9.7" height="61.89" fill="#99004c" stroke="#333" stroke-opacity=".85" stroke-width="0.7"/>
<rect x="114.97" y="103.99" width="9.7" height="58.01" fill="#99004c" stroke="#333" stroke-opacity=".85" stroke-width="0.7"/>
<rect x="134.85" y="103.99" width="9.7" height="58.01" fill="#99004c" stroke="#333" stroke-opacity=".85" stroke-width="0.7"/>
<rect x="154.75" y="106.66" width="9.7" height="55.34" fill="#99004c" stroke="#333" stroke-opacity=".85" stroke-width="0.7"/>
<rect x="174.64" y="108.61" width="9.7" height="53.39" fill="#99004c" stroke="#333" stroke-opacity=".85" stroke-width="0.7"/>
<rect x="194.53" y="112.73" width="9.7" height="49.27" fill="#99004c" stroke="#333" stroke-opacity=".85" stroke-width="0.7"/>
<rect x="214.41" y="114.43" width="9.7" height="47.57" fill="#ff0000" stroke="#333" stroke-opacity=".85" stroke-width="0.7"/>
<rect x="234.31" y="115.40" width="9.7" height="46.60" fill="#ff0000" stroke="#333" stroke-opacity=".85" stroke-width="0.7"/>
<rect x="254.20" y="116.01" width="9.7" height="45.99" fill="#ff0000" stroke="#333" stroke-opacity=".85" stroke-width="0.7"/>
<rect x="274.08" y="116.62" width="9.7" height="45.38" fill="#ff0000" stroke="#333" stroke-opacity=".85" stroke-width="0.7"/>
<rect x="293.97" y="118.07" width="9.7" height="43.93" fill="#ff0000" stroke="#333" stroke-opacity=".85" stroke-width="0.7"/>
<rect x="313.86" y="117.34" width="9.7" height="44.66" fill="#ff0000" stroke="#333" stroke-opacity=".85" stroke-width="0.7"/>
<rect x="333.75" y="117.34" width="9.7" height="44.66" fill="#ff0000" stroke="#333" stroke-opacity=".85" stroke-width="0.7"/>
<rect x="353.64" y="116.62" width="9.7" height="45.38" fill="#ff0000" stroke="#333" stroke-opacity=".85" stroke-width="0.7"/>
<rect x="373.53" y="108.12" width="9.7" height="53.88" fill="#99004c" stroke="#333" stroke-opacity=".85" stroke-width="0.7"/>
<rect x="393.42" y="96.71" width="9.7" height="65.29" fill="#99004c" stroke="#333" stroke-opacity=".85" stroke-width="0.7"/>
<rect x="413.31" y="80.70" width="9.7" height="81.30" fill="#4c0026" stroke="#333" stroke-opacity=".85" stroke-width="0.7"/>
<rect x="433.20" y="71.23" width="9.7" height="90.77" fill="#4c0026" stroke="#333" stroke-opacity=".85" stroke-width="0.7"/>
<rect x="453.09" y="75.36" width="9.7" height="86.64" fill="#4c0026" stroke="#333" stroke-opacity=".85" stroke-width="0.7"/>
<rect x="472.98" y="79.97" width="9.7" height="82.03" fill="#4c0026" stroke="#333" stroke-opacity=".85" stroke-width="0.7"/>
<rect x="492.88" y="80.45" width="9.7" height="81.55" fill="#4c0026" stroke="#333" stroke-opacity=".85" stroke-width="0.7"/>
<rect x="512.76" y="81.91" width="9.7" height="80.09" fill="#4c0026" stroke="#333" stroke-opacity=".85" stroke-width="0.7"/>
<text transform="translate(62.6,171.5) rotate(-45)" text-anchor="end" font-size="7.3" fill="#666">8 PM</text>
<text transform="translate(82.5,171.5) rotate(-45)" text-anchor="end" font-size="7.3" fill="#666">9 PM</text>
<text transform="translate(102.4,171.5) rotate(-45)" text-anchor="end" font-size="7.3" fill="#666">10 PM</text>
<text transform="translate(122.3,171.5) rotate(-45)" text-anchor="end" font-size="7.3" fill="#666">11 PM</text>
<text transform="translate(142.2,171.5) rotate(-45)" text-anchor="end" font-size="7.3" fill="#666">Dec 31, 2020 12 AM</text>
<text transform="translate(162.1,171.5) rotate(-45)" text-anchor="end" font-size="7.3" fill="#666">1 AM</text>
<text transform="translate(182.0,171.5) rotate(-45)" text-anchor="end" font-size="7.3" fill="#666">2 AM</text>
<text transform="translate(201.9,171.5) rotate(-45)" text-anchor="end" font-size="7.3" fill="#666">3 AM</text>
<text transform="translate(221.8,171.5) rotate(-45)" text-anchor="end" font-size="7.3" fill="#666">4 AM</text>
<text transform="translate(241.7,171.5) rotate(-45)" text-anchor="end" font-size="7.3" fill="#666">5 AM</text>
<text transform="translate(261.5,171.5) rotate(-45)" text-anchor="end" font-size="7.3" fill="#666">6 AM</text>
<text transform="translate(281.4,171.5) rotate(-45)" text-anchor="end" font-size="7.3" fill="#666">7 AM</text>
<text transform="translate(301.3,171.5) rotate(-45)" text-anchor="end" font-size="7.3" fill="#666">8 AM</text>
<text transform="translate(321.2,171.5) rotate(-45)" text-anchor="end" font-size="7.3" fill="#666">9 AM</text>
<text transform="translate(341.1,171.5) rotate(-45)" text-anchor="end" font-size="7.3" fill="#666">10 AM</text>
<text transform="translate(361.0,171.5) rotate(-45)" text-anchor="end" font-size="7.3" fill="#666">11 AM</text>
<text transform="translate(380.9,171.5) rotate(-45)" text-anchor="end" font-size="7.3" fill="#666">12 PM</text>
<text transform="translate(400.8,171.5) rotate(-45)" text-anchor="end" font-size="7.3" fill="#666">1 PM</text>
<text transform="translate(420.7,171.5) rotate(-45)" text-anchor="end" font-size="7.3" fill="#666">2 PM</text>
<text transform="translate(440.6,171.5) rotate(-45)" text-anchor="end" font-size="7.3" fill="#666">3 PM</text>
<text transform="translate(460.4,171.5) rotate(-45)" text-anchor="end" font-size="7.3" fill="#666">4 PM</text>
<text transform="translate(480.3,171.5) rotate(-45)" text-anchor="end" font-size="7.3" fill="#666">5 PM</text>
<text transform="translate(500.2,171.5) rotate(-45)" text-anchor="end" font-size="7.3" fill="#666">6 PM</text>
<text transform="translate(520.1,171.5) rotate(-45)" text-anchor="end" font-size="7.3" fill="#666">7 PM</text>
</svg>
</div>
<div id="cc" class="abs">
<div class="n"><div style="font-size:10px;line-height:12px;margin-top:4.300px">Current Conditions</div><div style="font-size:8px;line-height:12px;margin-top:2.5px">observed at</div><div style="font-size:10px;line-height:12px;margin-top:2px">Dec 31, 2020 7:00 PM (LT)</div></div>
<div class="m">330 AQI<br>Hazardous<br>PM2.5</div>
<div class="h">Health Message</div>
<div class="p">AQI values over 300 trigger health warnings of emergency conditions. The entire population is even more likely to be affected by serious health effects.</div>
</div>
</body></html>
